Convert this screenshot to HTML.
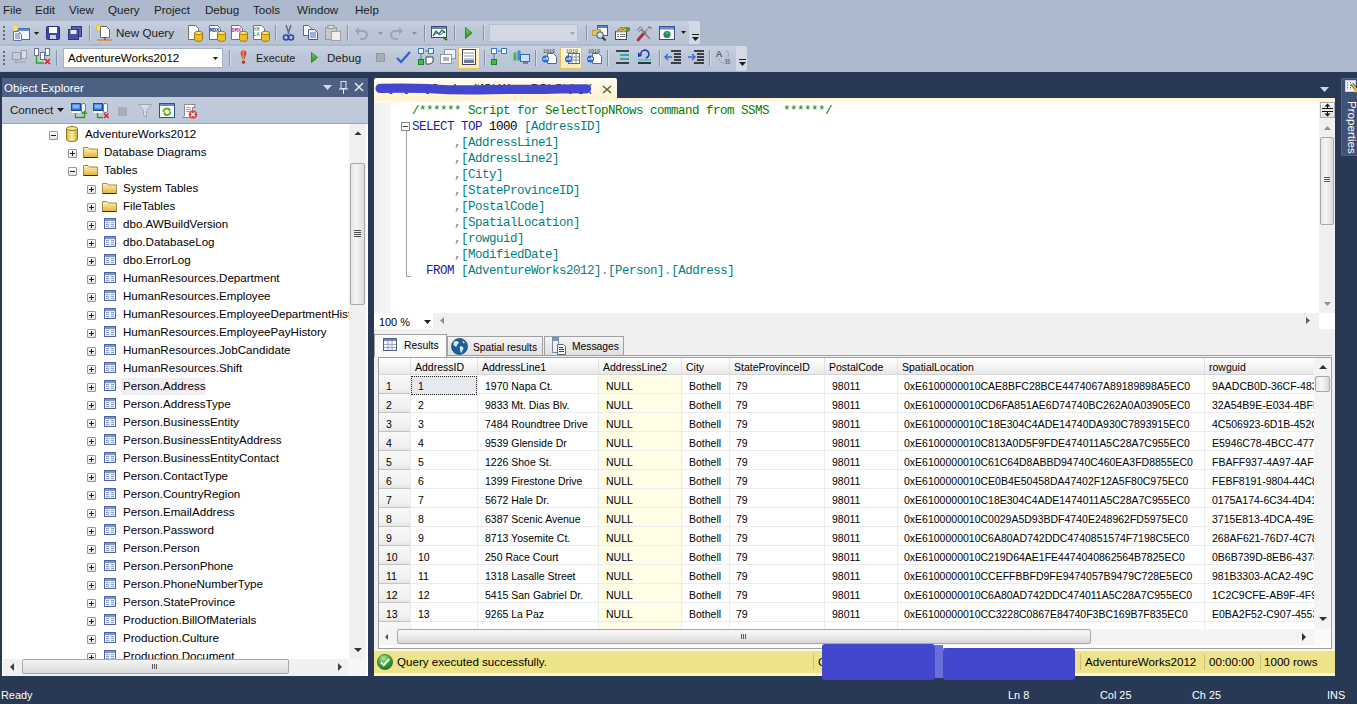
<!DOCTYPE html><html><head><meta charset="utf-8"><style>
html,body{margin:0;padding:0;}
body{width:1357px;height:704px;position:relative;overflow:hidden;background:#293955;font-family:"Liberation Sans",sans-serif;}
.t{position:absolute;white-space:pre;line-height:1;}
.m{position:absolute;white-space:pre;font-family:"Liberation Mono",monospace;font-size:12.5px;letter-spacing:-0.5px;line-height:16px;}
svg{overflow:visible}
</style></head><body>
<div style="position:absolute;left:0px;top:0px;width:1357px;height:72px;background:#adb9cd"></div>
<div class="t" style="left:3px;top:4.37px;font-size:11.6px;color:#1b1b1b;">File</div>
<div class="t" style="left:35px;top:4.37px;font-size:11.6px;color:#1b1b1b;">Edit</div>
<div class="t" style="left:69px;top:4.37px;font-size:11.6px;color:#1b1b1b;">View</div>
<div class="t" style="left:108px;top:4.37px;font-size:11.6px;color:#1b1b1b;">Query</div>
<div class="t" style="left:154px;top:4.37px;font-size:11.6px;color:#1b1b1b;">Project</div>
<div class="t" style="left:205px;top:4.37px;font-size:11.6px;color:#1b1b1b;">Debug</div>
<div class="t" style="left:253px;top:4.37px;font-size:11.6px;color:#1b1b1b;">Tools</div>
<div class="t" style="left:297px;top:4.37px;font-size:11.6px;color:#1b1b1b;">Window</div>
<div class="t" style="left:355px;top:4.37px;font-size:11.6px;color:#1b1b1b;">Help</div>
<div style="position:absolute;left:0px;top:21px;width:700px;height:23px;background:linear-gradient(#c9d2e1,#bcc7d8 40%,#b8c3d5);border-radius:0 3px 3px 0"></div>
<div style="position:absolute;left:3px;top:26px;width:2px;height:2px;background:#5a6a8a"></div>
<div style="position:absolute;left:3px;top:30px;width:2px;height:2px;background:#5a6a8a"></div>
<div style="position:absolute;left:3px;top:34px;width:2px;height:2px;background:#5a6a8a"></div>
<div style="position:absolute;left:3px;top:38px;width:2px;height:2px;background:#5a6a8a"></div>
<div style="position:absolute;left:689px;top:21px;width:11px;height:23px;background:#d3dae6;border-radius:0 3px 3px 0"></div>
<div style="position:absolute;left:0px;top:46px;width:747px;height:25px;background:linear-gradient(#c9d2e1,#bcc7d8 40%,#b8c3d5);border-radius:0 3px 3px 0"></div>
<div style="position:absolute;left:3px;top:51px;width:2px;height:2px;background:#5a6a8a"></div>
<div style="position:absolute;left:3px;top:55px;width:2px;height:2px;background:#5a6a8a"></div>
<div style="position:absolute;left:3px;top:59px;width:2px;height:2px;background:#5a6a8a"></div>
<div style="position:absolute;left:3px;top:63px;width:2px;height:2px;background:#5a6a8a"></div>
<div style="position:absolute;left:736px;top:46px;width:11px;height:25px;background:#d3dae6;border-radius:0 3px 3px 0"></div>
<div style="position:absolute;left:692px;top:34px;width:7px;height:1px;background:#1d1d1d"></div>
<svg style="position:absolute;left:692px;top:37px" width="7" height="4" viewBox="0 0 7 4"><path d="M0 0H7L3.5 4Z" fill="#1d1d1d"/></svg>
<div style="position:absolute;left:739px;top:59px;width:7px;height:1px;background:#1d1d1d"></div>
<svg style="position:absolute;left:739px;top:62px" width="7" height="4" viewBox="0 0 7 4"><path d="M0 0H7L3.5 4Z" fill="#1d1d1d"/></svg>
<svg style="position:absolute;left:12px;top:25px" width="18" height="17" viewBox="0 0 18 17"><rect x="5.5" y="3.5" width="12" height="11" fill="#f4f8ff" stroke="#4a6aa8"/><rect x="6" y="4" width="11" height="2" fill="#6a8ad0"/><path d="M1.5 6.5H6.5L9.5 9.5V15.5H1.5Z" fill="#ffffff" stroke="#5a78b0"/><path d="M3 9H8M3 11H8M3 13H8" stroke="#4a6aa8"/><circle cx="3.5" cy="3" r="2.6" fill="#ffe040"/></svg>
<svg style="position:absolute;left:34px;top:32px" width="5" height="3" viewBox="0 0 5 3"><path d="M0 0H5L2.5 3Z" fill="#1d1d1d"/></svg>
<svg style="position:absolute;left:46px;top:26px" width="14" height="14" viewBox="0 0 14 14"><rect x="0.5" y="0.5" width="13" height="13" rx="1" fill="#3a4aa0" stroke="#28307a"/><rect x="3" y="1" width="8" height="6" fill="#ffffff"/><rect x="4" y="9" width="6" height="4" fill="#c8d0f0"/></svg>
<svg style="position:absolute;left:68px;top:26px" width="14" height="14" viewBox="0 0 14 14"><rect x="3.5" y="0.5" width="10" height="10" fill="#5a60b8" stroke="#303880"/><rect x="0.5" y="3.5" width="10" height="10" fill="#4a50a8" stroke="#303880"/><rect x="2.5" y="4" width="6" height="4" fill="#e8ecff"/></svg>
<div style="position:absolute;left:89px;top:25px;width:1px;height:16px;background:#8593aa;box-shadow:1px 0 0 #d4dbe6"></div>
<svg style="position:absolute;left:96px;top:24px" width="17" height="18" viewBox="0 0 17 18"><circle cx="4" cy="4" r="3.5" fill="#ffe640" stroke="#e8b000" stroke-width=".6"/><path d="M4.5 2.5H10.5L13.5 5.5V13.5H4.5Z" fill="#ffffff" stroke="#6a6a6a"/><path d="M1 16H16" stroke="#e08a20" stroke-width="1.5"/><path d="M9 13V16" stroke="#404040"/></svg>
<div class="t" style="left:116px;top:27.37px;font-size:11.6px;color:#1b1b1b;">New Query</div>
<svg style="position:absolute;left:187px;top:25px" width="16" height="16" viewBox="0 0 16 16"><path d="M1.5 0.5H8.5L11.5 3.5V14.5H1.5Z" fill="#ffffff" stroke="#707070"/><path d="M7.5 8V14.5A4.0 1.8 0 0 0 15.5 14.5V8Z" fill="#f0c020" stroke="#a07810"/><ellipse cx="11.5" cy="8" rx="4.0" ry="1.6" fill="#ffe880" stroke="#a07810"/></svg>
<svg style="position:absolute;left:208px;top:25px" width="18" height="16" viewBox="0 0 18 16"><path d="M1.5 0.5H9.5L12.5 3.5V14.5H1.5Z" fill="#ffffff" stroke="#707070"/><text x="1.5" y="7" font-size="5.5" font-weight="bold" font-family="Liberation Mono" fill="#2040a0">MDX</text><path d="M9.5 8V14.5A4.0 1.8 0 0 0 17.5 14.5V8Z" fill="#f0c020" stroke="#a07810"/><ellipse cx="13.5" cy="8" rx="4.0" ry="1.6" fill="#ffe880" stroke="#a07810"/></svg>
<svg style="position:absolute;left:230px;top:25px" width="18" height="16" viewBox="0 0 18 16"><path d="M1.5 0.5H9.5L12.5 3.5V14.5H1.5Z" fill="#ffffff" stroke="#707070"/><text x="1.5" y="7" font-size="5.5" font-weight="bold" font-family="Liberation Mono" fill="#c030a0">DMX</text><path d="M9.5 8V14.5A4.0 1.8 0 0 0 17.5 14.5V8Z" fill="#f0c020" stroke="#a07810"/><ellipse cx="13.5" cy="8" rx="4.0" ry="1.6" fill="#ffe880" stroke="#a07810"/></svg>
<svg style="position:absolute;left:252px;top:25px" width="18" height="16" viewBox="0 0 18 16"><path d="M1.5 0.5H9.5L12.5 3.5V14.5H1.5Z" fill="#ffffff" stroke="#707070"/><text x="1.5" y="6" font-size="5" font-family="Liberation Mono" fill="#208060">XM</text><text x="1.5" y="11" font-size="5" font-family="Liberation Mono" fill="#208060">LA</text><path d="M9.5 8V14.5A4.0 1.8 0 0 0 17.5 14.5V8Z" fill="#f0c020" stroke="#a07810"/><ellipse cx="13.5" cy="8" rx="4.0" ry="1.6" fill="#ffe880" stroke="#a07810"/></svg>
<div style="position:absolute;left:275px;top:25px;width:1px;height:16px;background:#8593aa;box-shadow:1px 0 0 #d4dbe6"></div>
<svg style="position:absolute;left:283px;top:25px" width="11" height="16" viewBox="0 0 11 16"><path d="M3 0L6 9M8 0L5 9" stroke="#5a6a8a" stroke-width="1.4"/><circle cx="3" cy="12.5" r="2.5" fill="none" stroke="#2a48b0" stroke-width="1.6"/><circle cx="8" cy="12.5" r="2.5" fill="none" stroke="#2a48b0" stroke-width="1.6"/></svg>
<svg style="position:absolute;left:303px;top:25px" width="16" height="15" viewBox="0 0 16 15"><path d="M0.5 0.5H5.5L8.5 3.5V10.5H0.5Z" fill="#ffffff" stroke="#5a6a90"/><path d="M5.5 4.5H11.5L14.5 7.5V14.5H5.5Z" fill="#f0f4ff" stroke="#4a5a90"/><path d="M7 8H13M7 10H13M7 12H13" stroke="#4a6ab0"/></svg>
<svg style="position:absolute;left:325px;top:25px" width="17" height="16" viewBox="0 0 17 16"><rect x="0.5" y="2.5" width="11" height="12" fill="#c8c8c8" stroke="#9a9a9a"/><rect x="3" y="0.5" width="6" height="3" fill="#e0e0e0" stroke="#9a9a9a"/><rect x="6.5" y="6.5" width="9" height="9" fill="#f0f0f0" stroke="#a0a0a0"/></svg>
<div style="position:absolute;left:347px;top:25px;width:1px;height:16px;background:#8593aa;box-shadow:1px 0 0 #d4dbe6"></div>
<svg style="position:absolute;left:355px;top:26px" width="13" height="14" viewBox="0 0 13 14"><path d="M3 5H8A4 4 0 0 1 8 13H5" stroke="#9aa4b8" stroke-width="2" fill="none"/><path d="M0 5L4 1V9Z" fill="#9aa4b8"/></svg>
<svg style="position:absolute;left:378px;top:32px" width="5" height="3" viewBox="0 0 5 3"><path d="M0 0H5L2.5 3Z" fill="#8a94a8"/></svg>
<svg style="position:absolute;left:390px;top:26px" width="13" height="14" viewBox="0 0 13 14"><path d="M10 5H5A4 4 0 0 0 5 13H8" stroke="#9aa4b8" stroke-width="2" fill="none"/><path d="M13 5L9 1V9Z" fill="#9aa4b8"/></svg>
<svg style="position:absolute;left:412px;top:32px" width="5" height="3" viewBox="0 0 5 3"><path d="M0 0H5L2.5 3Z" fill="#8a94a8"/></svg>
<div style="position:absolute;left:424px;top:25px;width:1px;height:16px;background:#8593aa;box-shadow:1px 0 0 #d4dbe6"></div>
<svg style="position:absolute;left:431px;top:25px" width="17" height="16" viewBox="0 0 17 16"><rect x="0.5" y="1.5" width="15" height="11" fill="#ffffff" stroke="#404a60"/><rect x="1" y="2" width="14" height="2" fill="#6a86c8"/><path d="M2 11L5 6L8 9L11 5L14 8" stroke="#208030" stroke-width="1.3" fill="none"/><path d="M2 10L6 8L9 10L14 6" stroke="#3050c0" stroke-width="1" fill="none"/><path d="M12 12L16 15" stroke="#207020" stroke-width="2"/></svg>
<div style="position:absolute;left:454px;top:25px;width:1px;height:16px;background:#8593aa;box-shadow:1px 0 0 #d4dbe6"></div>
<svg style="position:absolute;left:465px;top:27px" width="8" height="12" viewBox="0 0 8 12"><defs><linearGradient id="pl2" x1="0" y1="0" x2="0" y2="1"><stop offset="0" stop-color="#7ad060"/><stop offset="1" stop-color="#1e8a1e"/></linearGradient></defs><path d="M0.5 0.5L7 6L0.5 11.5Z" fill="url(#pl2)" stroke="#217a21" stroke-width="0.8"/></svg>
<div style="position:absolute;left:483px;top:25px;width:1px;height:16px;background:#8593aa;box-shadow:1px 0 0 #d4dbe6"></div>
<div style="position:absolute;left:489px;top:24px;width:89px;height:18px;background:#d2d9e5;border:1px solid #b8c1d2;box-sizing:border-box"></div>
<svg style="position:absolute;left:570px;top:32px" width="5" height="3" viewBox="0 0 5 3"><path d="M0 0H5L2.5 3Z" fill="#9aa4b4"/></svg>
<div style="position:absolute;left:586px;top:25px;width:1px;height:16px;background:#8593aa;box-shadow:1px 0 0 #d4dbe6"></div>
<svg style="position:absolute;left:592px;top:25px" width="17" height="17" viewBox="0 0 17 17"><rect x="5.5" y="0.5" width="10" height="10" fill="#f6f9ff" stroke="#3d5a9a"/><rect x="6" y="1" width="9" height="2" fill="#5c80cc"/><path d="M0.5 5.5H4L5 4.5H8.5V10.5H0.5Z" fill="#e6c45a" stroke="#a88a30" stroke-width="0.7"/><circle cx="8" cy="10" r="3.2" fill="#e0f0ff" fill-opacity="0.8" stroke="#5a6a80" stroke-width="1.2"/><path d="M10.3 12.3L13.5 15.5" stroke="#3a3a3a" stroke-width="2"/></svg>
<svg style="position:absolute;left:614px;top:25px" width="17" height="16" viewBox="0 0 17 16"><rect x="1.5" y="6.5" width="11" height="8" fill="#ffffff" stroke="#404a5a"/><path d="M3 9.5H5M6 9.5H11M3 11.5H5M6 11.5H11" stroke="#6a7488"/><path d="M2 7L6 2.5H14.5L11 7Z" fill="#e8c040" stroke="#8a7020" stroke-width=".6"/><path d="M11 2.5H16V6L13 7Z" fill="#4a9a30"/><path d="M4 6L6.5 3M6 6.5L9 3M8 6.5L11 3" stroke="#1a1a1a" stroke-width="0.8" stroke-dasharray="1 1"/></svg>
<svg style="position:absolute;left:636px;top:25px" width="17" height="16" viewBox="0 0 17 16"><path d="M2 15L9 7" stroke="#b02840" stroke-width="2.8" stroke-linecap="round"/><path d="M9 7L13 2.5" stroke="#9aa4b0" stroke-width="1.6"/><path d="M4 3L14 14" stroke="#7a8494" stroke-width="1.6"/><path d="M1.5 4.5L4.5 1.5L6.5 3.5L3.5 6.5Z" fill="#b0b8c4" stroke="#606a78" stroke-width="0.7"/><path d="M12.5 1.5L15.5 3.5" stroke="#606a78" stroke-width="1.2"/></svg>
<svg style="position:absolute;left:659px;top:26px" width="16" height="15" viewBox="0 0 16 15"><rect x="0.5" y="0.5" width="15" height="13" fill="#f4f8ff" stroke="#34528e"/><rect x="1" y="1" width="14" height="2.5" fill="#6a8ad0"/><circle cx="8" cy="8.5" r="3.6" fill="#2a8a5a"/><path d="M6.5 7C7.5 6.5 8.5 7.5 9.5 7" stroke="#8ad0a0" stroke-width="0.8" fill="none"/></svg>
<svg style="position:absolute;left:681px;top:31px" width="5" height="3" viewBox="0 0 5 3"><path d="M0 0H5L2.5 3Z" fill="#1d1d1d"/></svg>
<svg style="position:absolute;left:12px;top:50px" width="17" height="15" viewBox="0 0 17 15"><rect x="0.5" y="2.5" width="8" height="7" fill="#c8ccd4" stroke="#9aa0aa"/><rect x="9.5" y="0.5" width="5" height="8" fill="#dcdfe4" stroke="#9aa0aa"/><path d="M2 12H14M4 10V14" stroke="#a0a4ac"/></svg>
<svg style="position:absolute;left:34px;top:48px" width="17" height="17" viewBox="0 0 17 17"><rect x="0.5" y="0.5" width="4" height="7" fill="#ffffff" stroke="#6a7a8a"/><rect x="6.5" y="4.5" width="4" height="7" fill="#ffffff" stroke="#6a7a8a"/><rect x="11.5" y="0.5" width="4" height="7" fill="#ffffff" stroke="#6a7a8a"/><path d="M2.5 8V15H10" stroke="#30a030" stroke-width="1.3" fill="none"/><path d="M11 11L16 16M16 11L11 16" stroke="#e02020" stroke-width="1.5"/></svg>
<div style="position:absolute;left:56px;top:50px;width:1px;height:16px;background:#8593aa;box-shadow:1px 0 0 #d4dbe6"></div>
<div style="position:absolute;left:63px;top:48px;width:160px;height:20px;background:#ffffff;border:1px solid #a4b0c6;box-sizing:border-box"></div>
<div class="t" style="left:68px;top:52.37px;font-size:11.6px;color:#000;">AdventureWorks2012</div>
<svg style="position:absolute;left:213px;top:57px" width="5" height="3" viewBox="0 0 5 3"><path d="M0 0H5L2.5 3Z" fill="#1d1d1d"/></svg>
<div style="position:absolute;left:229px;top:50px;width:1px;height:16px;background:#8593aa;box-shadow:1px 0 0 #d4dbe6"></div>
<svg style="position:absolute;left:240px;top:50px" width="7" height="14" viewBox="0 0 7 14"><defs><linearGradient id="ex" x1="0" y1="0" x2="1" y2="0"><stop offset="0" stop-color="#c83a20"/><stop offset="0.45" stop-color="#f48060"/><stop offset="1" stop-color="#b02810"/></linearGradient></defs><path d="M3.5 0.3C5.8 0.3 6.6 2 6.2 4.2L4.3 9.8H2.7L0.8 4.2C0.4 2 1.2 0.3 3.5 0.3Z" fill="url(#ex)"/><circle cx="3.5" cy="12.2" r="1.6" fill="#b83018"/></svg>
<div class="t" style="left:256px;top:52.95px;font-size:10.9px;color:#1b1b1b;">Execute</div>
<svg style="position:absolute;left:311px;top:52px" width="7" height="11" viewBox="0 0 7 11"><defs><linearGradient id="pl" x1="0" y1="0" x2="0" y2="1"><stop offset="0" stop-color="#7ad060"/><stop offset="1" stop-color="#1e8a1e"/></linearGradient></defs><path d="M0.5 0.5L6.5 5.5L0.5 10.5Z" fill="url(#pl)" stroke="#217a21" stroke-width="0.8"/></svg>
<div class="t" style="left:327px;top:52.37px;font-size:11.6px;color:#1b1b1b;">Debug</div>
<div style="position:absolute;left:376px;top:53px;width:9px;height:9px;background:#a8acb4;border:1px solid #9498a0;box-sizing:border-box"></div>
<svg style="position:absolute;left:396px;top:50px" width="15" height="14" viewBox="0 0 15 14"><path d="M1 8L5 12L14 2" stroke="#3a64c8" stroke-width="2.4" fill="none"/></svg>
<svg style="position:absolute;left:418px;top:48px" width="16" height="17" viewBox="0 0 16 17"><rect x="0.5" y="0.5" width="5" height="5" fill="#ffffff" stroke="#3a78c8"/><rect x="10.5" y="0.5" width="5" height="5" fill="#ffffff" stroke="#3a78c8"/><rect x="0.5" y="11.5" width="5" height="5" fill="#40c040" stroke="#208020"/><path d="M7 3H10M3 6V11" stroke="#3a78c8"/><path d="M8 9H15V14L12 16H8Z" fill="#ffffff" stroke="#404040"/></svg>
<svg style="position:absolute;left:440px;top:49px" width="16" height="16" viewBox="0 0 16 16"><rect x="4.5" y="0.5" width="11" height="9" fill="#f0f4fa" stroke="#8a96aa"/><rect x="0.5" y="5.5" width="11" height="9" fill="#ffffff" stroke="#8a96aa"/><path d="M3 9H9M3 11H9" stroke="#606a80"/></svg>
<div style="position:absolute;left:458px;top:47px;width:22px;height:22px;background:linear-gradient(#fff8dc,#fbe9b4);border:1px solid #e5c365;box-sizing:border-box"></div>
<svg style="position:absolute;left:462px;top:49px" width="14" height="16" viewBox="0 0 14 16"><rect x="0.5" y="0.5" width="13" height="15" fill="#ffffff" stroke="#404858"/><path d="M2 4H12M2 7H12M2 10H12" stroke="#8a92a8"/><rect x="2" y="11" width="10" height="3" fill="#6a7a98"/></svg>
<div style="position:absolute;left:484px;top:50px;width:1px;height:16px;background:#8593aa;box-shadow:1px 0 0 #d4dbe6"></div>
<svg style="position:absolute;left:491px;top:48px" width="16" height="17" viewBox="0 0 16 17"><rect x="0.5" y="0.5" width="5" height="5" fill="#ffffff" stroke="#3a78c8"/><rect x="10.5" y="0.5" width="5" height="5" fill="#ffffff" stroke="#3a78c8"/><rect x="0.5" y="11.5" width="5" height="5" fill="#40c040" stroke="#208020"/><path d="M7 3H10M3 6V11" stroke="#3a78c8"/></svg>
<svg style="position:absolute;left:513px;top:49px" width="17" height="16" viewBox="0 0 17 16"><rect x="0.5" y="3.5" width="3" height="8" fill="#50b050"/><rect x="4.5" y="1.5" width="3" height="10" fill="#3a8ad8"/><rect x="7.5" y="5.5" width="9" height="7" fill="#c8e0ff" stroke="#3a6ab0"/><path d="M10 14H15" stroke="#404040"/></svg>
<div style="position:absolute;left:535px;top:50px;width:1px;height:16px;background:#8593aa;box-shadow:1px 0 0 #d4dbe6"></div>
<svg style="position:absolute;left:541px;top:48px" width="17" height="17" viewBox="0 0 17 17"><text x="2" y="5" font-size="5" font-family="Liberation Mono" fill="#404040">1010</text><path d="M6.5 5.5H12.5L15.5 8.5V15.5H6.5Z" fill="#ffffff" stroke="#606a80"/><circle cx="4.5" cy="11" r="3.5" fill="#2a6ad8"/><path d="M2 11H7L5 9" stroke="#ffffff" stroke-width="1" fill="none"/></svg>
<div style="position:absolute;left:560px;top:47px;width:22px;height:22px;background:linear-gradient(#fff8dc,#fbe9b4);border:1px solid #e5c365;box-sizing:border-box"></div>
<svg style="position:absolute;left:564px;top:48px" width="17" height="17" viewBox="0 0 17 17"><text x="2" y="5" font-size="5" font-family="Liberation Mono" fill="#404040">1010</text><rect x="4.5" y="5.5" width="11" height="10" fill="#ffffff" stroke="#606a80"/><path d="M8 6V15M12 6V15M5 9H15M5 12H15" stroke="#8a92a8"/><circle cx="4.5" cy="11" r="3.5" fill="#2a6ad8"/><path d="M2 11H7L5 9" stroke="#ffffff" stroke-width="1" fill="none"/></svg>
<svg style="position:absolute;left:586px;top:48px" width="17" height="17" viewBox="0 0 17 17"><text x="2" y="5" font-size="5" font-family="Liberation Mono" fill="#404040">1010</text><path d="M6.5 5.5H12.5L15.5 8.5V15.5H6.5Z" fill="#ffffff" stroke="#606a80"/><circle cx="4.5" cy="11" r="3.5" fill="#2a6ad8"/><path d="M2 11H7L5 9" stroke="#ffffff" stroke-width="1" fill="none"/></svg>
<div style="position:absolute;left:607px;top:50px;width:1px;height:16px;background:#8593aa;box-shadow:1px 0 0 #d4dbe6"></div>
<svg style="position:absolute;left:614px;top:50px" width="16" height="14" viewBox="0 0 16 14"><path d="M2 1H15M6 5H15M6 9H15M2 13H15" stroke="#101010" stroke-width="1.6"/><path d="M6 5H15M6 9H15" stroke="#40c8c8" stroke-width="1.6"/></svg>
<svg style="position:absolute;left:636px;top:49px" width="16" height="16" viewBox="0 0 16 16"><path d="M5 6A4 4 0 1 1 10 9" stroke="#1a3ab0" stroke-width="1.6" fill="none"/><path d="M2 3L6 7L2 8Z" fill="#1a3ab0"/><path d="M2 11H15" stroke="#40c8c8" stroke-width="1.6"/><path d="M2 14H15" stroke="#101010" stroke-width="1.6"/></svg>
<div style="position:absolute;left:659px;top:50px;width:1px;height:16px;background:#8593aa;box-shadow:1px 0 0 #d4dbe6"></div>
<svg style="position:absolute;left:665px;top:49px" width="17" height="16" viewBox="0 0 17 16"><path d="M6 2H16M9 5H16M9 8H16M9 11H16M6 14H16" stroke="#101010" stroke-width="1.5"/><path d="M0 8H7M3 5L0 8L3 11" stroke="#3a6ad8" stroke-width="1.4" fill="none"/></svg>
<svg style="position:absolute;left:688px;top:49px" width="17" height="16" viewBox="0 0 17 16"><path d="M6 2H16M9 5H16M9 8H16M9 11H16M6 14H16" stroke="#101010" stroke-width="1.5"/><path d="M0 8H7M4 5L7 8L4 11" stroke="#3a6ad8" stroke-width="1.4" fill="none"/></svg>
<div style="position:absolute;left:709px;top:50px;width:1px;height:16px;background:#8593aa;box-shadow:1px 0 0 #d4dbe6"></div>
<svg style="position:absolute;left:716px;top:49px" width="17" height="16" viewBox="0 0 17 16"><text x="0" y="8" font-size="9" font-family="Liberation Sans" fill="#202020">A</text><text x="9" y="15" font-size="8" font-family="Liberation Sans" fill="#606060">B</text><path d="M10 1A6 6 0 0 1 12 8M3 10A5 5 0 0 0 8 14" stroke="#808080" stroke-dasharray="1 1" fill="none"/></svg>
<div style="position:absolute;left:2px;top:78px;width:366px;height:19px;background:#4d6082"></div>
<div class="t" style="left:4px;top:82.37px;font-size:11.6px;color:#ffffff;">Object Explorer</div>
<div style="position:absolute;left:2px;top:97px;width:366px;height:27px;background:linear-gradient(#c3ccdc,#bcc7d8)"></div>
<div style="position:absolute;left:2px;top:123px;width:366px;height:1px;background:#98a4b8"></div>
<div class="t" style="left:10px;top:104.37px;font-size:11.6px;color:#1b1b1b;">Connect</div>
<svg style="position:absolute;left:57px;top:108px" width="7" height="4" viewBox="0 0 7 4"><path d="M0 0H7L3.5 4Z" fill="#1b1b1b"/></svg>
<svg style="position:absolute;left:71px;top:103px" width="17" height="16" viewBox="0 0 17 16"><rect x="0.5" y="0.5" width="9" height="7" fill="#2f6fd8" stroke="#1d4a9a"/><rect x="1.5" y="1.5" width="7" height="4" fill="#7fb6ff"/><rect x="0.5" y="8" width="9" height="2" fill="#f4f6fa"/><rect x="10.5" y="0.5" width="4" height="9" rx="1.5" fill="#ffffff" stroke="#707a88"/><path d="M4.5 10V14.5H13.5V9" stroke="#2a9a2a" stroke-width="1.3" fill="none"/><path d="M11 11L13.5 8.5L16 11" stroke="#2a9a2a" stroke-width="1.3" fill="none"/></svg>
<svg style="position:absolute;left:93px;top:103px" width="17" height="16" viewBox="0 0 17 16"><rect x="0.5" y="0.5" width="9" height="7" fill="#2f6fd8" stroke="#1d4a9a"/><rect x="1.5" y="1.5" width="7" height="4" fill="#7fb6ff"/><rect x="0.5" y="8" width="9" height="2" fill="#f4f6fa"/><rect x="10.5" y="0.5" width="4" height="9" rx="1.5" fill="#ffffff" stroke="#707a88"/><path d="M4.5 10V14.5H10" stroke="#2a9a2a" stroke-width="1.3" fill="none"/><path d="M11 10.5L15.5 15M15.5 10.5L11 15" stroke="#e02020" stroke-width="1.5"/></svg>
<div style="position:absolute;left:118px;top:107px;width:9px;height:9px;background:#a8acb4"></div>
<svg style="position:absolute;left:138px;top:104px" width="14" height="14" viewBox="0 0 14 14"><path d="M0.5 0.5H13.5L8.5 6.5V13.5L5.5 11V6.5Z" fill="#d8dce4" stroke="#a0a6b0"/></svg>
<svg style="position:absolute;left:159px;top:103px" width="16" height="16" viewBox="0 0 16 16"><rect x="0.5" y="0.5" width="15" height="14" fill="#ffffff" stroke="#2e4e8c"/><rect x="1" y="1" width="14" height="2" fill="#6a8ad0"/><path d="M4.5 9A3.5 3 0 0 1 10.5 6.5M11.5 8.5A3.5 3 0 0 1 5.5 11" stroke="#5aae1a" stroke-width="1.8" fill="none"/><path d="M9 5L12 6.5L10 9Z M7 12.5L4 11L6 8.5Z" fill="#5aae1a"/></svg>
<svg style="position:absolute;left:181px;top:103px" width="17" height="16" viewBox="0 0 17 16"><path d="M3.5 1.5H14.5C13 2.5 13 4 14.5 4.5H11.5V11.5C12 13 11 14.5 9 14.5H1.5C3 14 3.5 13 3.5 12Z" fill="#ffffff" stroke="#8a8a8a"/><path d="M5 4.5H10M5 6.5H10M5 8.5H9" stroke="#a8a8a8"/><circle cx="12" cy="11.5" r="4.3" fill="#d84848"/><path d="M10.2 9.7L13.8 13.3M13.8 9.7L10.2 13.3" stroke="#ffffff" stroke-width="1.3"/></svg>
<svg style="position:absolute;left:323px;top:85px" width="9" height="5" viewBox="0 0 9 5"><path d="M0 0H9L4.5 5Z" fill="#d4dae6"/></svg>
<svg style="position:absolute;left:339px;top:81px" width="9" height="13" viewBox="0 0 9 13"><rect x="2" y="0.5" width="5" height="7" fill="none" stroke="#e4e8f0"/><path d="M0 8H9M4.5 8V13" stroke="#e4e8f0"/></svg>
<svg style="position:absolute;left:354px;top:82px" width="10" height="10" viewBox="0 0 10 10"><path d="M1 1L9 9M9 1L1 9" stroke="#e4e8f0" stroke-width="1.5"/></svg>
<div style="position:absolute;left:2px;top:124px;width:366px;height:552px;background:#ffffff"></div>
<div style="position:absolute;left:3px;top:124px;width:346px;height:535px;overflow:hidden">
<div style="position:absolute;left:46px;top:7px;width:9px;height:9px;background:linear-gradient(#ffffff,#e6e6e6);border:1px solid #969696;box-sizing:border-box;border-radius:1px"></div>
<div style="position:absolute;left:48px;top:11px;width:5px;height:1px;background:#202020"></div>
<svg style="position:absolute;left:63px;top:2px" width="12" height="16" viewBox="0 0 12 16"><defs><linearGradient id="dg" x1="0" y1="0" x2="1" y2="0"><stop offset="0" stop-color="#d8b640"/><stop offset="0.5" stop-color="#fff2a0"/><stop offset="1" stop-color="#c9a030"/></linearGradient></defs><path d="M0.5 2.5V13.5A5.5 2 0 0 0 11.5 13.5V2.5Z" fill="url(#dg)" stroke="#9a7a20"/><ellipse cx="6" cy="2.5" rx="5.5" ry="2" fill="#f6e490" stroke="#9a7a20"/></svg>
<div class="t" style="left:82px;top:4.37px;font-size:11.6px;color:#000000;">AdventureWorks2012</div>
<div style="position:absolute;left:65px;top:25px;width:9px;height:9px;background:linear-gradient(#ffffff,#e6e6e6);border:1px solid #969696;box-sizing:border-box;border-radius:1px"></div>
<div style="position:absolute;left:67px;top:29px;width:5px;height:1px;background:#202020"></div>
<div style="position:absolute;left:69px;top:27px;width:1px;height:5px;background:#202020"></div>
<svg style="position:absolute;left:80px;top:22px" width="15" height="12" viewBox="0 0 15 12"><defs><linearGradient id="fg" x1="0" y1="0" x2="0" y2="1"><stop offset="0" stop-color="#fff3b8"/><stop offset="1" stop-color="#e2b23a"/></linearGradient></defs><path d="M0.5 11.5V1.5H5L6.5 3H14.5V11.5Z" fill="url(#fg)" stroke="#a88a3a"/><path d="M0.5 11.5H14.5" stroke="#3a2a0a"/></svg>
<div class="t" style="left:101px;top:22.37px;font-size:11.6px;color:#000000;">Database Diagrams</div>
<div style="position:absolute;left:65px;top:43px;width:9px;height:9px;background:linear-gradient(#ffffff,#e6e6e6);border:1px solid #969696;box-sizing:border-box;border-radius:1px"></div>
<div style="position:absolute;left:67px;top:47px;width:5px;height:1px;background:#202020"></div>
<svg style="position:absolute;left:80px;top:40px" width="15" height="12" viewBox="0 0 15 12"><defs><linearGradient id="fg" x1="0" y1="0" x2="0" y2="1"><stop offset="0" stop-color="#fff3b8"/><stop offset="1" stop-color="#e2b23a"/></linearGradient></defs><path d="M0.5 11.5V1.5H5L6.5 3H14.5V11.5Z" fill="url(#fg)" stroke="#a88a3a"/><path d="M0.5 11.5H14.5" stroke="#3a2a0a"/></svg>
<div class="t" style="left:101px;top:40.37px;font-size:11.6px;color:#000000;">Tables</div>
<div style="position:absolute;left:84px;top:61px;width:9px;height:9px;background:linear-gradient(#ffffff,#e6e6e6);border:1px solid #969696;box-sizing:border-box;border-radius:1px"></div>
<div style="position:absolute;left:86px;top:65px;width:5px;height:1px;background:#202020"></div>
<div style="position:absolute;left:88px;top:63px;width:1px;height:5px;background:#202020"></div>
<svg style="position:absolute;left:99px;top:58px" width="15" height="12" viewBox="0 0 15 12"><defs><linearGradient id="fg" x1="0" y1="0" x2="0" y2="1"><stop offset="0" stop-color="#fff3b8"/><stop offset="1" stop-color="#e2b23a"/></linearGradient></defs><path d="M0.5 11.5V1.5H5L6.5 3H14.5V11.5Z" fill="url(#fg)" stroke="#a88a3a"/><path d="M0.5 11.5H14.5" stroke="#3a2a0a"/></svg>
<div class="t" style="left:120px;top:58.37px;font-size:11.6px;color:#000000;">System Tables</div>
<div style="position:absolute;left:84px;top:79px;width:9px;height:9px;background:linear-gradient(#ffffff,#e6e6e6);border:1px solid #969696;box-sizing:border-box;border-radius:1px"></div>
<div style="position:absolute;left:86px;top:83px;width:5px;height:1px;background:#202020"></div>
<div style="position:absolute;left:88px;top:81px;width:1px;height:5px;background:#202020"></div>
<svg style="position:absolute;left:99px;top:76px" width="15" height="12" viewBox="0 0 15 12"><defs><linearGradient id="fg" x1="0" y1="0" x2="0" y2="1"><stop offset="0" stop-color="#fff3b8"/><stop offset="1" stop-color="#e2b23a"/></linearGradient></defs><path d="M0.5 11.5V1.5H5L6.5 3H14.5V11.5Z" fill="url(#fg)" stroke="#a88a3a"/><path d="M0.5 11.5H14.5" stroke="#3a2a0a"/></svg>
<div class="t" style="left:120px;top:76.37px;font-size:11.6px;color:#000000;">FileTables</div>
<div style="position:absolute;left:84px;top:97px;width:9px;height:9px;background:linear-gradient(#ffffff,#e6e6e6);border:1px solid #969696;box-sizing:border-box;border-radius:1px"></div>
<div style="position:absolute;left:86px;top:101px;width:5px;height:1px;background:#202020"></div>
<div style="position:absolute;left:88px;top:99px;width:1px;height:5px;background:#202020"></div>
<svg style="position:absolute;left:101px;top:94px" width="12" height="11" viewBox="0 0 12 11"><rect x="0.5" y="0.5" width="11" height="10" fill="#e8eefa" stroke="#4a64a4"/><rect x="1" y="1" width="10" height="2" fill="#7896d6"/><path d="M2 4.5H5M7 4.5H10M2 6.5H5M7 6.5H10M2 8.5H5M7 8.5H10" stroke="#8ea2d0" stroke-width="1"/></svg>
<div class="t" style="left:120px;top:94.37px;font-size:11.6px;color:#000000;">dbo.AWBuildVersion</div>
<div style="position:absolute;left:84px;top:115px;width:9px;height:9px;background:linear-gradient(#ffffff,#e6e6e6);border:1px solid #969696;box-sizing:border-box;border-radius:1px"></div>
<div style="position:absolute;left:86px;top:119px;width:5px;height:1px;background:#202020"></div>
<div style="position:absolute;left:88px;top:117px;width:1px;height:5px;background:#202020"></div>
<svg style="position:absolute;left:101px;top:112px" width="12" height="11" viewBox="0 0 12 11"><rect x="0.5" y="0.5" width="11" height="10" fill="#e8eefa" stroke="#4a64a4"/><rect x="1" y="1" width="10" height="2" fill="#7896d6"/><path d="M2 4.5H5M7 4.5H10M2 6.5H5M7 6.5H10M2 8.5H5M7 8.5H10" stroke="#8ea2d0" stroke-width="1"/></svg>
<div class="t" style="left:120px;top:112.37px;font-size:11.6px;color:#000000;">dbo.DatabaseLog</div>
<div style="position:absolute;left:84px;top:133px;width:9px;height:9px;background:linear-gradient(#ffffff,#e6e6e6);border:1px solid #969696;box-sizing:border-box;border-radius:1px"></div>
<div style="position:absolute;left:86px;top:137px;width:5px;height:1px;background:#202020"></div>
<div style="position:absolute;left:88px;top:135px;width:1px;height:5px;background:#202020"></div>
<svg style="position:absolute;left:101px;top:130px" width="12" height="11" viewBox="0 0 12 11"><rect x="0.5" y="0.5" width="11" height="10" fill="#e8eefa" stroke="#4a64a4"/><rect x="1" y="1" width="10" height="2" fill="#7896d6"/><path d="M2 4.5H5M7 4.5H10M2 6.5H5M7 6.5H10M2 8.5H5M7 8.5H10" stroke="#8ea2d0" stroke-width="1"/></svg>
<div class="t" style="left:120px;top:130.37px;font-size:11.6px;color:#000000;">dbo.ErrorLog</div>
<div style="position:absolute;left:84px;top:151px;width:9px;height:9px;background:linear-gradient(#ffffff,#e6e6e6);border:1px solid #969696;box-sizing:border-box;border-radius:1px"></div>
<div style="position:absolute;left:86px;top:155px;width:5px;height:1px;background:#202020"></div>
<div style="position:absolute;left:88px;top:153px;width:1px;height:5px;background:#202020"></div>
<svg style="position:absolute;left:101px;top:148px" width="12" height="11" viewBox="0 0 12 11"><rect x="0.5" y="0.5" width="11" height="10" fill="#e8eefa" stroke="#4a64a4"/><rect x="1" y="1" width="10" height="2" fill="#7896d6"/><path d="M2 4.5H5M7 4.5H10M2 6.5H5M7 6.5H10M2 8.5H5M7 8.5H10" stroke="#8ea2d0" stroke-width="1"/></svg>
<div class="t" style="left:120px;top:148.37px;font-size:11.6px;color:#000000;">HumanResources.Department</div>
<div style="position:absolute;left:84px;top:169px;width:9px;height:9px;background:linear-gradient(#ffffff,#e6e6e6);border:1px solid #969696;box-sizing:border-box;border-radius:1px"></div>
<div style="position:absolute;left:86px;top:173px;width:5px;height:1px;background:#202020"></div>
<div style="position:absolute;left:88px;top:171px;width:1px;height:5px;background:#202020"></div>
<svg style="position:absolute;left:101px;top:166px" width="12" height="11" viewBox="0 0 12 11"><rect x="0.5" y="0.5" width="11" height="10" fill="#e8eefa" stroke="#4a64a4"/><rect x="1" y="1" width="10" height="2" fill="#7896d6"/><path d="M2 4.5H5M7 4.5H10M2 6.5H5M7 6.5H10M2 8.5H5M7 8.5H10" stroke="#8ea2d0" stroke-width="1"/></svg>
<div class="t" style="left:120px;top:166.37px;font-size:11.6px;color:#000000;">HumanResources.Employee</div>
<div style="position:absolute;left:84px;top:187px;width:9px;height:9px;background:linear-gradient(#ffffff,#e6e6e6);border:1px solid #969696;box-sizing:border-box;border-radius:1px"></div>
<div style="position:absolute;left:86px;top:191px;width:5px;height:1px;background:#202020"></div>
<div style="position:absolute;left:88px;top:189px;width:1px;height:5px;background:#202020"></div>
<svg style="position:absolute;left:101px;top:184px" width="12" height="11" viewBox="0 0 12 11"><rect x="0.5" y="0.5" width="11" height="10" fill="#e8eefa" stroke="#4a64a4"/><rect x="1" y="1" width="10" height="2" fill="#7896d6"/><path d="M2 4.5H5M7 4.5H10M2 6.5H5M7 6.5H10M2 8.5H5M7 8.5H10" stroke="#8ea2d0" stroke-width="1"/></svg>
<div class="t" style="left:120px;top:184.37px;font-size:11.6px;color:#000000;">HumanResources.EmployeeDepartmentHistory</div>
<div style="position:absolute;left:84px;top:205px;width:9px;height:9px;background:linear-gradient(#ffffff,#e6e6e6);border:1px solid #969696;box-sizing:border-box;border-radius:1px"></div>
<div style="position:absolute;left:86px;top:209px;width:5px;height:1px;background:#202020"></div>
<div style="position:absolute;left:88px;top:207px;width:1px;height:5px;background:#202020"></div>
<svg style="position:absolute;left:101px;top:202px" width="12" height="11" viewBox="0 0 12 11"><rect x="0.5" y="0.5" width="11" height="10" fill="#e8eefa" stroke="#4a64a4"/><rect x="1" y="1" width="10" height="2" fill="#7896d6"/><path d="M2 4.5H5M7 4.5H10M2 6.5H5M7 6.5H10M2 8.5H5M7 8.5H10" stroke="#8ea2d0" stroke-width="1"/></svg>
<div class="t" style="left:120px;top:202.37px;font-size:11.6px;color:#000000;">HumanResources.EmployeePayHistory</div>
<div style="position:absolute;left:84px;top:223px;width:9px;height:9px;background:linear-gradient(#ffffff,#e6e6e6);border:1px solid #969696;box-sizing:border-box;border-radius:1px"></div>
<div style="position:absolute;left:86px;top:227px;width:5px;height:1px;background:#202020"></div>
<div style="position:absolute;left:88px;top:225px;width:1px;height:5px;background:#202020"></div>
<svg style="position:absolute;left:101px;top:220px" width="12" height="11" viewBox="0 0 12 11"><rect x="0.5" y="0.5" width="11" height="10" fill="#e8eefa" stroke="#4a64a4"/><rect x="1" y="1" width="10" height="2" fill="#7896d6"/><path d="M2 4.5H5M7 4.5H10M2 6.5H5M7 6.5H10M2 8.5H5M7 8.5H10" stroke="#8ea2d0" stroke-width="1"/></svg>
<div class="t" style="left:120px;top:220.37px;font-size:11.6px;color:#000000;">HumanResources.JobCandidate</div>
<div style="position:absolute;left:84px;top:241px;width:9px;height:9px;background:linear-gradient(#ffffff,#e6e6e6);border:1px solid #969696;box-sizing:border-box;border-radius:1px"></div>
<div style="position:absolute;left:86px;top:245px;width:5px;height:1px;background:#202020"></div>
<div style="position:absolute;left:88px;top:243px;width:1px;height:5px;background:#202020"></div>
<svg style="position:absolute;left:101px;top:238px" width="12" height="11" viewBox="0 0 12 11"><rect x="0.5" y="0.5" width="11" height="10" fill="#e8eefa" stroke="#4a64a4"/><rect x="1" y="1" width="10" height="2" fill="#7896d6"/><path d="M2 4.5H5M7 4.5H10M2 6.5H5M7 6.5H10M2 8.5H5M7 8.5H10" stroke="#8ea2d0" stroke-width="1"/></svg>
<div class="t" style="left:120px;top:238.37px;font-size:11.6px;color:#000000;">HumanResources.Shift</div>
<div style="position:absolute;left:118px;top:254px;width:84px;height:17px;background:#efefef"></div>
<div style="position:absolute;left:84px;top:259px;width:9px;height:9px;background:linear-gradient(#ffffff,#e6e6e6);border:1px solid #969696;box-sizing:border-box;border-radius:1px"></div>
<div style="position:absolute;left:86px;top:263px;width:5px;height:1px;background:#202020"></div>
<div style="position:absolute;left:88px;top:261px;width:1px;height:5px;background:#202020"></div>
<svg style="position:absolute;left:101px;top:256px" width="12" height="11" viewBox="0 0 12 11"><rect x="0.5" y="0.5" width="11" height="10" fill="#e8eefa" stroke="#4a64a4"/><rect x="1" y="1" width="10" height="2" fill="#7896d6"/><path d="M2 4.5H5M7 4.5H10M2 6.5H5M7 6.5H10M2 8.5H5M7 8.5H10" stroke="#8ea2d0" stroke-width="1"/></svg>
<div class="t" style="left:120px;top:256.37px;font-size:11.6px;color:#000000;">Person.Address</div>
<div style="position:absolute;left:84px;top:277px;width:9px;height:9px;background:linear-gradient(#ffffff,#e6e6e6);border:1px solid #969696;box-sizing:border-box;border-radius:1px"></div>
<div style="position:absolute;left:86px;top:281px;width:5px;height:1px;background:#202020"></div>
<div style="position:absolute;left:88px;top:279px;width:1px;height:5px;background:#202020"></div>
<svg style="position:absolute;left:101px;top:274px" width="12" height="11" viewBox="0 0 12 11"><rect x="0.5" y="0.5" width="11" height="10" fill="#e8eefa" stroke="#4a64a4"/><rect x="1" y="1" width="10" height="2" fill="#7896d6"/><path d="M2 4.5H5M7 4.5H10M2 6.5H5M7 6.5H10M2 8.5H5M7 8.5H10" stroke="#8ea2d0" stroke-width="1"/></svg>
<div class="t" style="left:120px;top:274.37px;font-size:11.6px;color:#000000;">Person.AddressType</div>
<div style="position:absolute;left:84px;top:295px;width:9px;height:9px;background:linear-gradient(#ffffff,#e6e6e6);border:1px solid #969696;box-sizing:border-box;border-radius:1px"></div>
<div style="position:absolute;left:86px;top:299px;width:5px;height:1px;background:#202020"></div>
<div style="position:absolute;left:88px;top:297px;width:1px;height:5px;background:#202020"></div>
<svg style="position:absolute;left:101px;top:292px" width="12" height="11" viewBox="0 0 12 11"><rect x="0.5" y="0.5" width="11" height="10" fill="#e8eefa" stroke="#4a64a4"/><rect x="1" y="1" width="10" height="2" fill="#7896d6"/><path d="M2 4.5H5M7 4.5H10M2 6.5H5M7 6.5H10M2 8.5H5M7 8.5H10" stroke="#8ea2d0" stroke-width="1"/></svg>
<div class="t" style="left:120px;top:292.37px;font-size:11.6px;color:#000000;">Person.BusinessEntity</div>
<div style="position:absolute;left:84px;top:313px;width:9px;height:9px;background:linear-gradient(#ffffff,#e6e6e6);border:1px solid #969696;box-sizing:border-box;border-radius:1px"></div>
<div style="position:absolute;left:86px;top:317px;width:5px;height:1px;background:#202020"></div>
<div style="position:absolute;left:88px;top:315px;width:1px;height:5px;background:#202020"></div>
<svg style="position:absolute;left:101px;top:310px" width="12" height="11" viewBox="0 0 12 11"><rect x="0.5" y="0.5" width="11" height="10" fill="#e8eefa" stroke="#4a64a4"/><rect x="1" y="1" width="10" height="2" fill="#7896d6"/><path d="M2 4.5H5M7 4.5H10M2 6.5H5M7 6.5H10M2 8.5H5M7 8.5H10" stroke="#8ea2d0" stroke-width="1"/></svg>
<div class="t" style="left:120px;top:310.37px;font-size:11.6px;color:#000000;">Person.BusinessEntityAddress</div>
<div style="position:absolute;left:84px;top:331px;width:9px;height:9px;background:linear-gradient(#ffffff,#e6e6e6);border:1px solid #969696;box-sizing:border-box;border-radius:1px"></div>
<div style="position:absolute;left:86px;top:335px;width:5px;height:1px;background:#202020"></div>
<div style="position:absolute;left:88px;top:333px;width:1px;height:5px;background:#202020"></div>
<svg style="position:absolute;left:101px;top:328px" width="12" height="11" viewBox="0 0 12 11"><rect x="0.5" y="0.5" width="11" height="10" fill="#e8eefa" stroke="#4a64a4"/><rect x="1" y="1" width="10" height="2" fill="#7896d6"/><path d="M2 4.5H5M7 4.5H10M2 6.5H5M7 6.5H10M2 8.5H5M7 8.5H10" stroke="#8ea2d0" stroke-width="1"/></svg>
<div class="t" style="left:120px;top:328.37px;font-size:11.6px;color:#000000;">Person.BusinessEntityContact</div>
<div style="position:absolute;left:84px;top:349px;width:9px;height:9px;background:linear-gradient(#ffffff,#e6e6e6);border:1px solid #969696;box-sizing:border-box;border-radius:1px"></div>
<div style="position:absolute;left:86px;top:353px;width:5px;height:1px;background:#202020"></div>
<div style="position:absolute;left:88px;top:351px;width:1px;height:5px;background:#202020"></div>
<svg style="position:absolute;left:101px;top:346px" width="12" height="11" viewBox="0 0 12 11"><rect x="0.5" y="0.5" width="11" height="10" fill="#e8eefa" stroke="#4a64a4"/><rect x="1" y="1" width="10" height="2" fill="#7896d6"/><path d="M2 4.5H5M7 4.5H10M2 6.5H5M7 6.5H10M2 8.5H5M7 8.5H10" stroke="#8ea2d0" stroke-width="1"/></svg>
<div class="t" style="left:120px;top:346.37px;font-size:11.6px;color:#000000;">Person.ContactType</div>
<div style="position:absolute;left:84px;top:367px;width:9px;height:9px;background:linear-gradient(#ffffff,#e6e6e6);border:1px solid #969696;box-sizing:border-box;border-radius:1px"></div>
<div style="position:absolute;left:86px;top:371px;width:5px;height:1px;background:#202020"></div>
<div style="position:absolute;left:88px;top:369px;width:1px;height:5px;background:#202020"></div>
<svg style="position:absolute;left:101px;top:364px" width="12" height="11" viewBox="0 0 12 11"><rect x="0.5" y="0.5" width="11" height="10" fill="#e8eefa" stroke="#4a64a4"/><rect x="1" y="1" width="10" height="2" fill="#7896d6"/><path d="M2 4.5H5M7 4.5H10M2 6.5H5M7 6.5H10M2 8.5H5M7 8.5H10" stroke="#8ea2d0" stroke-width="1"/></svg>
<div class="t" style="left:120px;top:364.37px;font-size:11.6px;color:#000000;">Person.CountryRegion</div>
<div style="position:absolute;left:84px;top:385px;width:9px;height:9px;background:linear-gradient(#ffffff,#e6e6e6);border:1px solid #969696;box-sizing:border-box;border-radius:1px"></div>
<div style="position:absolute;left:86px;top:389px;width:5px;height:1px;background:#202020"></div>
<div style="position:absolute;left:88px;top:387px;width:1px;height:5px;background:#202020"></div>
<svg style="position:absolute;left:101px;top:382px" width="12" height="11" viewBox="0 0 12 11"><rect x="0.5" y="0.5" width="11" height="10" fill="#e8eefa" stroke="#4a64a4"/><rect x="1" y="1" width="10" height="2" fill="#7896d6"/><path d="M2 4.5H5M7 4.5H10M2 6.5H5M7 6.5H10M2 8.5H5M7 8.5H10" stroke="#8ea2d0" stroke-width="1"/></svg>
<div class="t" style="left:120px;top:382.37px;font-size:11.6px;color:#000000;">Person.EmailAddress</div>
<div style="position:absolute;left:84px;top:403px;width:9px;height:9px;background:linear-gradient(#ffffff,#e6e6e6);border:1px solid #969696;box-sizing:border-box;border-radius:1px"></div>
<div style="position:absolute;left:86px;top:407px;width:5px;height:1px;background:#202020"></div>
<div style="position:absolute;left:88px;top:405px;width:1px;height:5px;background:#202020"></div>
<svg style="position:absolute;left:101px;top:400px" width="12" height="11" viewBox="0 0 12 11"><rect x="0.5" y="0.5" width="11" height="10" fill="#e8eefa" stroke="#4a64a4"/><rect x="1" y="1" width="10" height="2" fill="#7896d6"/><path d="M2 4.5H5M7 4.5H10M2 6.5H5M7 6.5H10M2 8.5H5M7 8.5H10" stroke="#8ea2d0" stroke-width="1"/></svg>
<div class="t" style="left:120px;top:400.37px;font-size:11.6px;color:#000000;">Person.Password</div>
<div style="position:absolute;left:84px;top:421px;width:9px;height:9px;background:linear-gradient(#ffffff,#e6e6e6);border:1px solid #969696;box-sizing:border-box;border-radius:1px"></div>
<div style="position:absolute;left:86px;top:425px;width:5px;height:1px;background:#202020"></div>
<div style="position:absolute;left:88px;top:423px;width:1px;height:5px;background:#202020"></div>
<svg style="position:absolute;left:101px;top:418px" width="12" height="11" viewBox="0 0 12 11"><rect x="0.5" y="0.5" width="11" height="10" fill="#e8eefa" stroke="#4a64a4"/><rect x="1" y="1" width="10" height="2" fill="#7896d6"/><path d="M2 4.5H5M7 4.5H10M2 6.5H5M7 6.5H10M2 8.5H5M7 8.5H10" stroke="#8ea2d0" stroke-width="1"/></svg>
<div class="t" style="left:120px;top:418.37px;font-size:11.6px;color:#000000;">Person.Person</div>
<div style="position:absolute;left:84px;top:439px;width:9px;height:9px;background:linear-gradient(#ffffff,#e6e6e6);border:1px solid #969696;box-sizing:border-box;border-radius:1px"></div>
<div style="position:absolute;left:86px;top:443px;width:5px;height:1px;background:#202020"></div>
<div style="position:absolute;left:88px;top:441px;width:1px;height:5px;background:#202020"></div>
<svg style="position:absolute;left:101px;top:436px" width="12" height="11" viewBox="0 0 12 11"><rect x="0.5" y="0.5" width="11" height="10" fill="#e8eefa" stroke="#4a64a4"/><rect x="1" y="1" width="10" height="2" fill="#7896d6"/><path d="M2 4.5H5M7 4.5H10M2 6.5H5M7 6.5H10M2 8.5H5M7 8.5H10" stroke="#8ea2d0" stroke-width="1"/></svg>
<div class="t" style="left:120px;top:436.37px;font-size:11.6px;color:#000000;">Person.PersonPhone</div>
<div style="position:absolute;left:84px;top:457px;width:9px;height:9px;background:linear-gradient(#ffffff,#e6e6e6);border:1px solid #969696;box-sizing:border-box;border-radius:1px"></div>
<div style="position:absolute;left:86px;top:461px;width:5px;height:1px;background:#202020"></div>
<div style="position:absolute;left:88px;top:459px;width:1px;height:5px;background:#202020"></div>
<svg style="position:absolute;left:101px;top:454px" width="12" height="11" viewBox="0 0 12 11"><rect x="0.5" y="0.5" width="11" height="10" fill="#e8eefa" stroke="#4a64a4"/><rect x="1" y="1" width="10" height="2" fill="#7896d6"/><path d="M2 4.5H5M7 4.5H10M2 6.5H5M7 6.5H10M2 8.5H5M7 8.5H10" stroke="#8ea2d0" stroke-width="1"/></svg>
<div class="t" style="left:120px;top:454.37px;font-size:11.6px;color:#000000;">Person.PhoneNumberType</div>
<div style="position:absolute;left:84px;top:475px;width:9px;height:9px;background:linear-gradient(#ffffff,#e6e6e6);border:1px solid #969696;box-sizing:border-box;border-radius:1px"></div>
<div style="position:absolute;left:86px;top:479px;width:5px;height:1px;background:#202020"></div>
<div style="position:absolute;left:88px;top:477px;width:1px;height:5px;background:#202020"></div>
<svg style="position:absolute;left:101px;top:472px" width="12" height="11" viewBox="0 0 12 11"><rect x="0.5" y="0.5" width="11" height="10" fill="#e8eefa" stroke="#4a64a4"/><rect x="1" y="1" width="10" height="2" fill="#7896d6"/><path d="M2 4.5H5M7 4.5H10M2 6.5H5M7 6.5H10M2 8.5H5M7 8.5H10" stroke="#8ea2d0" stroke-width="1"/></svg>
<div class="t" style="left:120px;top:472.37px;font-size:11.6px;color:#000000;">Person.StateProvince</div>
<div style="position:absolute;left:84px;top:493px;width:9px;height:9px;background:linear-gradient(#ffffff,#e6e6e6);border:1px solid #969696;box-sizing:border-box;border-radius:1px"></div>
<div style="position:absolute;left:86px;top:497px;width:5px;height:1px;background:#202020"></div>
<div style="position:absolute;left:88px;top:495px;width:1px;height:5px;background:#202020"></div>
<svg style="position:absolute;left:101px;top:490px" width="12" height="11" viewBox="0 0 12 11"><rect x="0.5" y="0.5" width="11" height="10" fill="#e8eefa" stroke="#4a64a4"/><rect x="1" y="1" width="10" height="2" fill="#7896d6"/><path d="M2 4.5H5M7 4.5H10M2 6.5H5M7 6.5H10M2 8.5H5M7 8.5H10" stroke="#8ea2d0" stroke-width="1"/></svg>
<div class="t" style="left:120px;top:490.37px;font-size:11.6px;color:#000000;">Production.BillOfMaterials</div>
<div style="position:absolute;left:84px;top:511px;width:9px;height:9px;background:linear-gradient(#ffffff,#e6e6e6);border:1px solid #969696;box-sizing:border-box;border-radius:1px"></div>
<div style="position:absolute;left:86px;top:515px;width:5px;height:1px;background:#202020"></div>
<div style="position:absolute;left:88px;top:513px;width:1px;height:5px;background:#202020"></div>
<svg style="position:absolute;left:101px;top:508px" width="12" height="11" viewBox="0 0 12 11"><rect x="0.5" y="0.5" width="11" height="10" fill="#e8eefa" stroke="#4a64a4"/><rect x="1" y="1" width="10" height="2" fill="#7896d6"/><path d="M2 4.5H5M7 4.5H10M2 6.5H5M7 6.5H10M2 8.5H5M7 8.5H10" stroke="#8ea2d0" stroke-width="1"/></svg>
<div class="t" style="left:120px;top:508.37px;font-size:11.6px;color:#000000;">Production.Culture</div>
<div style="position:absolute;left:84px;top:529px;width:9px;height:9px;background:linear-gradient(#ffffff,#e6e6e6);border:1px solid #969696;box-sizing:border-box;border-radius:1px"></div>
<div style="position:absolute;left:86px;top:533px;width:5px;height:1px;background:#202020"></div>
<div style="position:absolute;left:88px;top:531px;width:1px;height:5px;background:#202020"></div>
<svg style="position:absolute;left:101px;top:526px" width="12" height="11" viewBox="0 0 12 11"><rect x="0.5" y="0.5" width="11" height="10" fill="#e8eefa" stroke="#4a64a4"/><rect x="1" y="1" width="10" height="2" fill="#7896d6"/><path d="M2 4.5H5M7 4.5H10M2 6.5H5M7 6.5H10M2 8.5H5M7 8.5H10" stroke="#8ea2d0" stroke-width="1"/></svg>
<div class="t" style="left:120px;top:526.37px;font-size:11.6px;color:#000000;">Production.Document</div>
</div>
<div style="position:absolute;left:349px;top:124px;width:17px;height:535px;background:#f0f0f0"></div>
<div style="position:absolute;left:350px;top:163px;width:15px;height:142px;background:linear-gradient(90deg,#e4e4e4,#f4f4f4 40%,#dcdcdc);border:1px solid #a8a8a8;border-radius:2px;box-sizing:border-box"></div>
<div style="position:absolute;left:354px;top:230px;width:7px;height:1px;background:#4a4a4a"></div>
<div style="position:absolute;left:354px;top:232px;width:7px;height:1px;background:#4a4a4a"></div>
<div style="position:absolute;left:354px;top:234px;width:7px;height:1px;background:#4a4a4a"></div>
<div style="position:absolute;left:354px;top:236px;width:7px;height:1px;background:#4a4a4a"></div>
<svg style="position:absolute;left:354px;top:131px" width="8" height="4" viewBox="0 0 8 4"><path d="M0.5 4H7.5L4 0.5Z" fill="#303030"/></svg>
<svg style="position:absolute;left:354px;top:648px" width="8" height="4" viewBox="0 0 8 4"><path d="M0 0H8L4 4Z" fill="#303030"/></svg>
<div style="position:absolute;left:3px;top:659px;width:363px;height:17px;background:#f0f0f0"></div>
<div style="position:absolute;left:22px;top:659px;width:267px;height:15px;background:linear-gradient(#f4f4f4,#e8e8e8 50%,#d8d8d8);border:1px solid #a8a8a8;border-radius:2px;box-sizing:border-box"></div>
<svg style="position:absolute;left:10px;top:663px" width="4" height="8" viewBox="0 0 4 8"><path d="M4 0V8L0 4Z" fill="#404040"/></svg>
<svg style="position:absolute;left:338px;top:663px" width="4" height="8" viewBox="0 0 4 8"><path d="M0 0V8L4 4Z" fill="#404040"/></svg>
<div style="position:absolute;left:348px;top:659px;width:18px;height:17px;background:#f6f6f6"></div>
<div style="position:absolute;left:152px;top:664px;width:1px;height:5px;background:#5a5a5a"></div>
<div style="position:absolute;left:154px;top:664px;width:1px;height:5px;background:#5a5a5a"></div>
<div style="position:absolute;left:156px;top:664px;width:1px;height:5px;background:#5a5a5a"></div>
<div style="position:absolute;left:374px;top:78px;width:243px;height:21px;background:linear-gradient(#fffcf2,#fff3d0);border-radius:2px 2px 0 0"></div>
<div style="position:absolute;left:374px;top:78px;width:218px;height:20px;overflow:hidden">
<div class="t" style="left:3px;top:4.37px;font-size:11.6px;color:#000;">SQLQuery2.sql - rdtfGhWxyg.BQLGhjkg (SA))))</div>
</div>
<svg style="position:absolute;left:370px;top:80px" width="230" height="20" viewBox="0 0 230 20"><path d="M10 8.4C25 8 40 8 58 8.5C70 10 85 10 110 9.8C130 9 150 9.5 175 9.3C195 9 205 8.6 216.5 8.8" stroke="#4347cf" stroke-width="9.2" stroke-linecap="round" fill="none"/></svg>
<svg style="position:absolute;left:602px;top:85px" width="10" height="9" viewBox="0 0 10 9"><path d="M1 1L9 8M9 1L1 8" stroke="#6a5e3a" stroke-width="1.6"/></svg>
<div style="position:absolute;left:374px;top:98px;width:961px;height:3px;background:linear-gradient(#fff0c4,#fff6dc)"></div>
<div style="position:absolute;left:374px;top:101px;width:961px;height:212px;background:#ffffff"></div>
<div style="position:absolute;left:374px;top:101px;width:17px;height:212px;background:linear-gradient(90deg,#efeff1,#f3f3f4 55%,#f7f7f7)"></div>
<div style="position:absolute;left:374px;top:101px;width:945px;height:2px;background:linear-gradient(#fff9ea,#fffdf8)"></div>
<div class="m" style="left:412px;top:103px"><span style="color:#008000">/****** Script for SelectTopNRows command from SSMS  ******/</span>
<span style="color:#1a1aa6">SELECT</span> <span style="color:#1a1aa6">TOP</span> <span style="color:#000">1000</span> <span style="color:#008080">[AddressID]</span>
      <span style="color:#808080">,</span><span style="color:#008080">[AddressLine1]</span>
      <span style="color:#808080">,</span><span style="color:#008080">[AddressLine2]</span>
      <span style="color:#808080">,</span><span style="color:#008080">[City]</span>
      <span style="color:#808080">,</span><span style="color:#008080">[StateProvinceID]</span>
      <span style="color:#808080">,</span><span style="color:#008080">[PostalCode]</span>
      <span style="color:#808080">,</span><span style="color:#008080">[SpatialLocation]</span>
      <span style="color:#808080">,</span><span style="color:#008080">[rowguid]</span>
      <span style="color:#808080">,</span><span style="color:#008080">[ModifiedDate]</span>
  <span style="color:#1a1aa6">FROM</span> <span style="color:#008080">[AdventureWorks2012]</span><span style="color:#808080">.</span><span style="color:#008080">[Person]</span><span style="color:#808080">.</span><span style="color:#008080">[Address]</span></div>
<div style="position:absolute;left:401px;top:122px;width:9px;height:9px;border:1px solid #8a8a8a;box-sizing:border-box;background:#fff"></div>
<div style="position:absolute;left:403px;top:126px;width:5px;height:1px;background:#404040"></div>
<div style="position:absolute;left:406px;top:131px;width:1px;height:146px;background:#a0a0a0"></div>
<div style="position:absolute;left:406px;top:276px;width:5px;height:1px;background:#a0a0a0"></div>
<div style="position:absolute;left:1319px;top:101px;width:16px;height:212px;background:#f0f0f0"></div>
<div style="position:absolute;left:1320px;top:102px;width:15px;height:16px;background:linear-gradient(#fafafa,#e0e0e0);border:1px solid #b0b0b0;box-sizing:border-box"></div>
<div style="position:absolute;left:1322px;top:108px;width:11px;height:1px;background:#111"></div>
<div style="position:absolute;left:1322px;top:111px;width:11px;height:1px;background:#111"></div>
<svg style="position:absolute;left:1324px;top:103px" width="7" height="5" viewBox="0 0 7 5"><path d="M0.5 3.5L3.5 0.5L6.5 3.5Z" fill="#111"/><path d="M3.5 3V5" stroke="#111"/></svg>
<svg style="position:absolute;left:1324px;top:112px" width="7" height="5" viewBox="0 0 7 5"><path d="M0.5 1.5L3.5 4.5L6.5 1.5Z" fill="#111"/><path d="M3.5 0V2" stroke="#111"/></svg>
<svg style="position:absolute;left:1324px;top:126px" width="7" height="4" viewBox="0 0 7 4"><path d="M0 4H7L3.5 0Z" fill="#909090"/></svg>
<div style="position:absolute;left:1320px;top:137px;width:14px;height:88px;background:linear-gradient(90deg,#e6e6e6,#f6f6f6 40%,#dadada);border:1px solid #a8a8a8;border-radius:2px;box-sizing:border-box"></div>
<div style="position:absolute;left:1324px;top:177px;width:6px;height:1px;background:#5a5a5a"></div>
<div style="position:absolute;left:1324px;top:179px;width:6px;height:1px;background:#5a5a5a"></div>
<div style="position:absolute;left:1324px;top:181px;width:6px;height:1px;background:#5a5a5a"></div>
<svg style="position:absolute;left:1324px;top:302px" width="7" height="4" viewBox="0 0 7 4"><path d="M0 0H7L3.5 4Z" fill="#909090"/></svg>
<div style="position:absolute;left:374px;top:313px;width:961px;height:16px;background:#f0f0f0"></div>
<div style="position:absolute;left:374px;top:313px;width:59px;height:16px;background:#ffffff"></div>
<div class="t" style="left:379px;top:316.95px;font-size:10.9px;color:#000;">100 %</div>
<svg style="position:absolute;left:424px;top:320px" width="7" height="4" viewBox="0 0 7 4"><path d="M0 0H7L3.5 4Z" fill="#202020"/></svg>
<svg style="position:absolute;left:440px;top:317px" width="4" height="7" viewBox="0 0 4 7"><path d="M4 0V7L0 3.5Z" fill="#909090"/></svg>
<svg style="position:absolute;left:1306px;top:317px" width="4" height="7" viewBox="0 0 4 7"><path d="M0 0V7L4 3.5Z" fill="#606060"/></svg>
<div style="position:absolute;left:1319px;top:313px;width:16px;height:16px;background:#ffffff"></div>
<div style="position:absolute;left:374px;top:329px;width:961px;height:320px;background:#f0f0f0"></div>
<div style="position:absolute;left:447px;top:355px;width:885px;height:1px;background:#a0a0a0"></div>
<div style="position:absolute;left:447px;top:336px;width:96px;height:19px;background:linear-gradient(#f4f4f4,#e0e0e0);border:1px solid #a0a0a0;border-bottom:none;box-sizing:border-box"></div>
<div style="position:absolute;left:544px;top:336px;width:80px;height:19px;background:linear-gradient(#f4f4f4,#e0e0e0);border:1px solid #a0a0a0;border-bottom:none;box-sizing:border-box"></div>
<div style="position:absolute;left:374px;top:334px;width:73px;height:23px;background:#fbfbfb;border:1px solid #a0a0a0;border-bottom:none;box-sizing:border-box"></div>
<svg style="position:absolute;left:383px;top:338px" width="14" height="13" viewBox="0 0 14 13"><rect x="0.5" y="0.5" width="13" height="12" fill="#f4f6fb" stroke="#4e5e88"/><rect x="1" y="1" width="12" height="2" fill="#6f86c0"/><path d="M5 3V12M9 3V12M1 6.5H13M1 9.5H13" stroke="#9aa8c8"/></svg>
<div class="t" style="left:404px;top:340.86px;font-size:10.4px;color:#000;">Results</div>
<svg style="position:absolute;left:451px;top:338px" width="17" height="17" viewBox="0 0 17 17"><circle cx="8.5" cy="8.5" r="8" fill="#1f5f96"/><path d="M3 3.5C5 2.5 7 3 8 4.5C7.5 6 6 6.5 5.5 8.5C4.5 9 3.5 8 2.5 7C2.5 5.5 2.6 4.5 3 3.5Z" fill="#d4eaf6"/><path d="M9.5 8C11 8 12.5 9 12.5 10.5C12 12 11 13 10.5 15C9.5 14 9 12.5 9 11C8.5 10 8.8 9 9.5 8Z" fill="#d4eaf6"/><path d="M11 2.5C12.5 3 13.5 4 14 5L12.5 5.5Z" fill="#bfe0f0"/><circle cx="8.5" cy="8.5" r="8" fill="none" stroke="#164a78" stroke-width="0.8"/></svg>
<div class="t" style="left:473px;top:342.53px;font-size:10.2px;color:#000;">Spatial results</div>
<svg style="position:absolute;left:551px;top:337px" width="16" height="18" viewBox="0 0 16 18"><rect x="1.5" y="0.5" width="6" height="15" fill="#eef3fa" stroke="#7a8aa2"/><rect x="2" y="1" width="5" height="3" fill="#6f9ad8"/><path d="M6.5 7.5H12.5L14.5 9.5V17.5H6.5Z" fill="#ffffff" stroke="#5a6476"/><path d="M8 10.5H12M8 12.5H13M8 14.5H13" stroke="#3a4050"/></svg>
<div class="t" style="left:572px;top:342.45px;font-size:10.3px;color:#000;">Messages</div>
<div style="position:absolute;left:378px;top:357px;width:954px;height:292px;background:#ffffff;border:1px solid #a0a0a0;box-sizing:border-box"></div>
<div style="position:absolute;left:379px;top:358px;width:935px;height:271px;overflow:hidden;background:#fff">
<div style="position:absolute;left:0px;top:0px;width:1100px;height:16px;background:linear-gradient(#ffffff,#f3f3f3 60%,#e8e8e8)"></div>
<div style="position:absolute;left:0px;top:16px;width:1100px;height:1px;background:#d6d6d6"></div>
<div style="position:absolute;left:220px;top:17px;width:82px;height:300px;background:#fffde6"></div>
<div style="position:absolute;left:0px;top:17px;width:31px;height:19px;background:linear-gradient(#f8f8f8,#f1f1f1 75%,#e6e6e6);border-bottom:1px solid #c4c4c4;box-sizing:border-box"></div>
<div style="position:absolute;left:0px;top:36px;width:31px;height:19px;background:linear-gradient(#f8f8f8,#f1f1f1 75%,#e6e6e6);border-bottom:1px solid #c4c4c4;box-sizing:border-box"></div>
<div style="position:absolute;left:0px;top:55px;width:31px;height:19px;background:linear-gradient(#f8f8f8,#f1f1f1 75%,#e6e6e6);border-bottom:1px solid #c4c4c4;box-sizing:border-box"></div>
<div style="position:absolute;left:0px;top:74px;width:31px;height:19px;background:linear-gradient(#f8f8f8,#f1f1f1 75%,#e6e6e6);border-bottom:1px solid #c4c4c4;box-sizing:border-box"></div>
<div style="position:absolute;left:0px;top:93px;width:31px;height:19px;background:linear-gradient(#f8f8f8,#f1f1f1 75%,#e6e6e6);border-bottom:1px solid #c4c4c4;box-sizing:border-box"></div>
<div style="position:absolute;left:0px;top:112px;width:31px;height:19px;background:linear-gradient(#f8f8f8,#f1f1f1 75%,#e6e6e6);border-bottom:1px solid #c4c4c4;box-sizing:border-box"></div>
<div style="position:absolute;left:0px;top:131px;width:31px;height:19px;background:linear-gradient(#f8f8f8,#f1f1f1 75%,#e6e6e6);border-bottom:1px solid #c4c4c4;box-sizing:border-box"></div>
<div style="position:absolute;left:0px;top:150px;width:31px;height:19px;background:linear-gradient(#f8f8f8,#f1f1f1 75%,#e6e6e6);border-bottom:1px solid #c4c4c4;box-sizing:border-box"></div>
<div style="position:absolute;left:0px;top:169px;width:31px;height:19px;background:linear-gradient(#f8f8f8,#f1f1f1 75%,#e6e6e6);border-bottom:1px solid #c4c4c4;box-sizing:border-box"></div>
<div style="position:absolute;left:0px;top:188px;width:31px;height:19px;background:linear-gradient(#f8f8f8,#f1f1f1 75%,#e6e6e6);border-bottom:1px solid #c4c4c4;box-sizing:border-box"></div>
<div style="position:absolute;left:0px;top:207px;width:31px;height:19px;background:linear-gradient(#f8f8f8,#f1f1f1 75%,#e6e6e6);border-bottom:1px solid #c4c4c4;box-sizing:border-box"></div>
<div style="position:absolute;left:0px;top:226px;width:31px;height:19px;background:linear-gradient(#f8f8f8,#f1f1f1 75%,#e6e6e6);border-bottom:1px solid #c4c4c4;box-sizing:border-box"></div>
<div style="position:absolute;left:0px;top:245px;width:31px;height:19px;background:linear-gradient(#f8f8f8,#f1f1f1 75%,#e6e6e6);border-bottom:1px solid #c4c4c4;box-sizing:border-box"></div>
<div style="position:absolute;left:0px;top:264px;width:31px;height:19px;background:linear-gradient(#f8f8f8,#f1f1f1 75%,#e6e6e6);border-bottom:1px solid #c4c4c4;box-sizing:border-box"></div>
<div style="position:absolute;left:31px;top:0px;width:1px;height:16px;background:#e0e0e0"></div>
<div style="position:absolute;left:31px;top:17px;width:1px;height:300px;background:#ececec"></div>
<div style="position:absolute;left:98px;top:0px;width:1px;height:16px;background:#e0e0e0"></div>
<div style="position:absolute;left:98px;top:17px;width:1px;height:300px;background:#ececec"></div>
<div style="position:absolute;left:219px;top:0px;width:1px;height:16px;background:#e0e0e0"></div>
<div style="position:absolute;left:219px;top:17px;width:1px;height:300px;background:#ececec"></div>
<div style="position:absolute;left:302px;top:0px;width:1px;height:16px;background:#e0e0e0"></div>
<div style="position:absolute;left:302px;top:17px;width:1px;height:300px;background:#ececec"></div>
<div style="position:absolute;left:350px;top:0px;width:1px;height:16px;background:#e0e0e0"></div>
<div style="position:absolute;left:350px;top:17px;width:1px;height:300px;background:#ececec"></div>
<div style="position:absolute;left:445px;top:0px;width:1px;height:16px;background:#e0e0e0"></div>
<div style="position:absolute;left:445px;top:17px;width:1px;height:300px;background:#ececec"></div>
<div style="position:absolute;left:518px;top:0px;width:1px;height:16px;background:#e0e0e0"></div>
<div style="position:absolute;left:518px;top:17px;width:1px;height:300px;background:#ececec"></div>
<div style="position:absolute;left:825px;top:0px;width:1px;height:16px;background:#e0e0e0"></div>
<div style="position:absolute;left:825px;top:17px;width:1px;height:300px;background:#ececec"></div>
<div style="position:absolute;left:31px;top:35px;width:1100px;height:1px;background:#ececec"></div>
<div style="position:absolute;left:31px;top:54px;width:1100px;height:1px;background:#ececec"></div>
<div style="position:absolute;left:31px;top:73px;width:1100px;height:1px;background:#ececec"></div>
<div style="position:absolute;left:31px;top:92px;width:1100px;height:1px;background:#ececec"></div>
<div style="position:absolute;left:31px;top:111px;width:1100px;height:1px;background:#ececec"></div>
<div style="position:absolute;left:31px;top:130px;width:1100px;height:1px;background:#ececec"></div>
<div style="position:absolute;left:31px;top:149px;width:1100px;height:1px;background:#ececec"></div>
<div style="position:absolute;left:31px;top:168px;width:1100px;height:1px;background:#ececec"></div>
<div style="position:absolute;left:31px;top:187px;width:1100px;height:1px;background:#ececec"></div>
<div style="position:absolute;left:31px;top:206px;width:1100px;height:1px;background:#ececec"></div>
<div style="position:absolute;left:31px;top:225px;width:1100px;height:1px;background:#ececec"></div>
<div style="position:absolute;left:31px;top:244px;width:1100px;height:1px;background:#ececec"></div>
<div style="position:absolute;left:31px;top:263px;width:1100px;height:1px;background:#ececec"></div>
<div style="position:absolute;left:31px;top:282px;width:1100px;height:1px;background:#ececec"></div>
<div class="t" style="left:36px;top:4.28px;font-size:10.5px;color:#000;">AddressID</div>
<div class="t" style="left:103px;top:4.28px;font-size:10.5px;color:#000;">AddressLine1</div>
<div class="t" style="left:224px;top:4.28px;font-size:10.5px;color:#000;">AddressLine2</div>
<div class="t" style="left:307px;top:4.28px;font-size:10.5px;color:#000;">City</div>
<div class="t" style="left:355px;top:4.28px;font-size:10.5px;color:#000;">StateProvinceID</div>
<div class="t" style="left:450px;top:4.28px;font-size:10.5px;color:#000;">PostalCode</div>
<div class="t" style="left:523px;top:4.28px;font-size:10.5px;color:#000;">SpatialLocation</div>
<div class="t" style="left:830px;top:4.28px;font-size:10.5px;color:#000;">rowguid</div>
<div style="position:absolute;left:32px;top:18px;width:66px;height:19px;background:#e6eaee;outline:1px dotted #202020;outline-offset:-1px"></div>
<div class="t" style="left:7px;top:23.08px;font-size:10.5px;color:#000;">1</div>
<div class="t" style="left:39px;top:23.08px;font-size:10.5px;color:#000;">1</div>
<div class="t" style="left:106px;top:23.08px;font-size:10.5px;color:#000;">1970 Napa Ct.</div>
<div class="t" style="left:227px;top:23.08px;font-size:10.5px;color:#000;">NULL</div>
<div class="t" style="left:310px;top:23.08px;font-size:10.5px;color:#000;">Bothell</div>
<div class="t" style="left:357px;top:23.08px;font-size:10.5px;color:#000;">79</div>
<div class="t" style="left:453px;top:23.08px;font-size:10.5px;color:#000;">98011</div>
<div class="t" style="left:525px;top:23.08px;font-size:10.5px;color:#000;">0xE6100000010CAE8BFC28BCE4474067A89189898A5EC0</div>
<div class="t" style="left:833px;top:23.08px;font-size:10.5px;color:#000;">9AADCB0D-36CF-483F-84D8</div>
<div class="t" style="left:7px;top:42.08px;font-size:10.5px;color:#000;">2</div>
<div class="t" style="left:39px;top:42.08px;font-size:10.5px;color:#000;">2</div>
<div class="t" style="left:106px;top:42.08px;font-size:10.5px;color:#000;">9833 Mt. Dias Blv.</div>
<div class="t" style="left:227px;top:42.08px;font-size:10.5px;color:#000;">NULL</div>
<div class="t" style="left:310px;top:42.08px;font-size:10.5px;color:#000;">Bothell</div>
<div class="t" style="left:357px;top:42.08px;font-size:10.5px;color:#000;">79</div>
<div class="t" style="left:453px;top:42.08px;font-size:10.5px;color:#000;">98011</div>
<div class="t" style="left:525px;top:42.08px;font-size:10.5px;color:#000;">0xE6100000010CD6FA851AE6D74740BC262A0A03905EC0</div>
<div class="t" style="left:833px;top:42.08px;font-size:10.5px;color:#000;">32A54B9E-E034-4BFB-B573</div>
<div class="t" style="left:7px;top:61.08px;font-size:10.5px;color:#000;">3</div>
<div class="t" style="left:39px;top:61.08px;font-size:10.5px;color:#000;">3</div>
<div class="t" style="left:106px;top:61.08px;font-size:10.5px;color:#000;">7484 Roundtree Drive</div>
<div class="t" style="left:227px;top:61.08px;font-size:10.5px;color:#000;">NULL</div>
<div class="t" style="left:310px;top:61.08px;font-size:10.5px;color:#000;">Bothell</div>
<div class="t" style="left:357px;top:61.08px;font-size:10.5px;color:#000;">79</div>
<div class="t" style="left:453px;top:61.08px;font-size:10.5px;color:#000;">98011</div>
<div class="t" style="left:525px;top:61.08px;font-size:10.5px;color:#000;">0xE6100000010C18E304C4ADE14740DA930C7893915EC0</div>
<div class="t" style="left:833px;top:61.08px;font-size:10.5px;color:#000;">4C506923-6D1B-452C-A07C</div>
<div class="t" style="left:7px;top:80.08px;font-size:10.5px;color:#000;">4</div>
<div class="t" style="left:39px;top:80.08px;font-size:10.5px;color:#000;">4</div>
<div class="t" style="left:106px;top:80.08px;font-size:10.5px;color:#000;">9539 Glenside Dr</div>
<div class="t" style="left:227px;top:80.08px;font-size:10.5px;color:#000;">NULL</div>
<div class="t" style="left:310px;top:80.08px;font-size:10.5px;color:#000;">Bothell</div>
<div class="t" style="left:357px;top:80.08px;font-size:10.5px;color:#000;">79</div>
<div class="t" style="left:453px;top:80.08px;font-size:10.5px;color:#000;">98011</div>
<div class="t" style="left:525px;top:80.08px;font-size:10.5px;color:#000;">0xE6100000010C813A0D5F9FDE474011A5C28A7C955EC0</div>
<div class="t" style="left:833px;top:80.08px;font-size:10.5px;color:#000;">E5946C78-4BCC-477F-9FA1</div>
<div class="t" style="left:7px;top:99.08px;font-size:10.5px;color:#000;">5</div>
<div class="t" style="left:39px;top:99.08px;font-size:10.5px;color:#000;">5</div>
<div class="t" style="left:106px;top:99.08px;font-size:10.5px;color:#000;">1226 Shoe St.</div>
<div class="t" style="left:227px;top:99.08px;font-size:10.5px;color:#000;">NULL</div>
<div class="t" style="left:310px;top:99.08px;font-size:10.5px;color:#000;">Bothell</div>
<div class="t" style="left:357px;top:99.08px;font-size:10.5px;color:#000;">79</div>
<div class="t" style="left:453px;top:99.08px;font-size:10.5px;color:#000;">98011</div>
<div class="t" style="left:525px;top:99.08px;font-size:10.5px;color:#000;">0xE6100000010C61C64D8ABBD94740C460EA3FD8855EC0</div>
<div class="t" style="left:833px;top:99.08px;font-size:10.5px;color:#000;">FBAFF937-4A97-4AF0-81FD</div>
<div class="t" style="left:7px;top:118.08px;font-size:10.5px;color:#000;">6</div>
<div class="t" style="left:39px;top:118.08px;font-size:10.5px;color:#000;">6</div>
<div class="t" style="left:106px;top:118.08px;font-size:10.5px;color:#000;">1399 Firestone Drive</div>
<div class="t" style="left:227px;top:118.08px;font-size:10.5px;color:#000;">NULL</div>
<div class="t" style="left:310px;top:118.08px;font-size:10.5px;color:#000;">Bothell</div>
<div class="t" style="left:357px;top:118.08px;font-size:10.5px;color:#000;">79</div>
<div class="t" style="left:453px;top:118.08px;font-size:10.5px;color:#000;">98011</div>
<div class="t" style="left:525px;top:118.08px;font-size:10.5px;color:#000;">0xE6100000010CE0B4E50458DA47402F12A5F80C975EC0</div>
<div class="t" style="left:833px;top:118.08px;font-size:10.5px;color:#000;">FEBF8191-9804-44C8-877A</div>
<div class="t" style="left:7px;top:137.08px;font-size:10.5px;color:#000;">7</div>
<div class="t" style="left:39px;top:137.08px;font-size:10.5px;color:#000;">7</div>
<div class="t" style="left:106px;top:137.08px;font-size:10.5px;color:#000;">5672 Hale Dr.</div>
<div class="t" style="left:227px;top:137.08px;font-size:10.5px;color:#000;">NULL</div>
<div class="t" style="left:310px;top:137.08px;font-size:10.5px;color:#000;">Bothell</div>
<div class="t" style="left:357px;top:137.08px;font-size:10.5px;color:#000;">79</div>
<div class="t" style="left:453px;top:137.08px;font-size:10.5px;color:#000;">98011</div>
<div class="t" style="left:525px;top:137.08px;font-size:10.5px;color:#000;">0xE6100000010C18E304C4ADE1474011A5C28A7C955EC0</div>
<div class="t" style="left:833px;top:137.08px;font-size:10.5px;color:#000;">0175A174-6C34-4D41-B3C1</div>
<div class="t" style="left:7px;top:156.08px;font-size:10.5px;color:#000;">8</div>
<div class="t" style="left:39px;top:156.08px;font-size:10.5px;color:#000;">8</div>
<div class="t" style="left:106px;top:156.08px;font-size:10.5px;color:#000;">6387 Scenic Avenue</div>
<div class="t" style="left:227px;top:156.08px;font-size:10.5px;color:#000;">NULL</div>
<div class="t" style="left:310px;top:156.08px;font-size:10.5px;color:#000;">Bothell</div>
<div class="t" style="left:357px;top:156.08px;font-size:10.5px;color:#000;">79</div>
<div class="t" style="left:453px;top:156.08px;font-size:10.5px;color:#000;">98011</div>
<div class="t" style="left:525px;top:156.08px;font-size:10.5px;color:#000;">0xE6100000010C0029A5D93BDF4740E248962FD5975EC0</div>
<div class="t" style="left:833px;top:156.08px;font-size:10.5px;color:#000;">3715E813-4DCA-49E0-8F1C</div>
<div class="t" style="left:7px;top:175.08px;font-size:10.5px;color:#000;">9</div>
<div class="t" style="left:39px;top:175.08px;font-size:10.5px;color:#000;">9</div>
<div class="t" style="left:106px;top:175.08px;font-size:10.5px;color:#000;">8713 Yosemite Ct.</div>
<div class="t" style="left:227px;top:175.08px;font-size:10.5px;color:#000;">NULL</div>
<div class="t" style="left:310px;top:175.08px;font-size:10.5px;color:#000;">Bothell</div>
<div class="t" style="left:357px;top:175.08px;font-size:10.5px;color:#000;">79</div>
<div class="t" style="left:453px;top:175.08px;font-size:10.5px;color:#000;">98011</div>
<div class="t" style="left:525px;top:175.08px;font-size:10.5px;color:#000;">0xE6100000010C6A80AD742DDC4740851574F7198C5EC0</div>
<div class="t" style="left:833px;top:175.08px;font-size:10.5px;color:#000;">268AF621-76D7-4C78-9441</div>
<div class="t" style="left:7px;top:194.08px;font-size:10.5px;color:#000;">10</div>
<div class="t" style="left:39px;top:194.08px;font-size:10.5px;color:#000;">10</div>
<div class="t" style="left:106px;top:194.08px;font-size:10.5px;color:#000;">250 Race Court</div>
<div class="t" style="left:227px;top:194.08px;font-size:10.5px;color:#000;">NULL</div>
<div class="t" style="left:310px;top:194.08px;font-size:10.5px;color:#000;">Bothell</div>
<div class="t" style="left:357px;top:194.08px;font-size:10.5px;color:#000;">79</div>
<div class="t" style="left:453px;top:194.08px;font-size:10.5px;color:#000;">98011</div>
<div class="t" style="left:525px;top:194.08px;font-size:10.5px;color:#000;">0xE6100000010C219D64AE1FE4474040862564B7825EC0</div>
<div class="t" style="left:833px;top:194.08px;font-size:10.5px;color:#000;">0B6B739D-8EB6-4378-8D55</div>
<div class="t" style="left:7px;top:213.08px;font-size:10.5px;color:#000;">11</div>
<div class="t" style="left:39px;top:213.08px;font-size:10.5px;color:#000;">11</div>
<div class="t" style="left:106px;top:213.08px;font-size:10.5px;color:#000;">1318 Lasalle Street</div>
<div class="t" style="left:227px;top:213.08px;font-size:10.5px;color:#000;">NULL</div>
<div class="t" style="left:310px;top:213.08px;font-size:10.5px;color:#000;">Bothell</div>
<div class="t" style="left:357px;top:213.08px;font-size:10.5px;color:#000;">79</div>
<div class="t" style="left:453px;top:213.08px;font-size:10.5px;color:#000;">98011</div>
<div class="t" style="left:525px;top:213.08px;font-size:10.5px;color:#000;">0xE6100000010CCEFFBBFD9FE9474057B9479C728E5EC0</div>
<div class="t" style="left:833px;top:213.08px;font-size:10.5px;color:#000;">981B3303-ACA2-49C7-9A96</div>
<div class="t" style="left:7px;top:232.08px;font-size:10.5px;color:#000;">12</div>
<div class="t" style="left:39px;top:232.08px;font-size:10.5px;color:#000;">12</div>
<div class="t" style="left:106px;top:232.08px;font-size:10.5px;color:#000;">5415 San Gabriel Dr.</div>
<div class="t" style="left:227px;top:232.08px;font-size:10.5px;color:#000;">NULL</div>
<div class="t" style="left:310px;top:232.08px;font-size:10.5px;color:#000;">Bothell</div>
<div class="t" style="left:357px;top:232.08px;font-size:10.5px;color:#000;">79</div>
<div class="t" style="left:453px;top:232.08px;font-size:10.5px;color:#000;">98011</div>
<div class="t" style="left:525px;top:232.08px;font-size:10.5px;color:#000;">0xE6100000010C6A80AD742DDC474011A5C28A7C955EC0</div>
<div class="t" style="left:833px;top:232.08px;font-size:10.5px;color:#000;">1C2C9CFE-AB9F-4F96-8E54</div>
<div class="t" style="left:7px;top:251.08px;font-size:10.5px;color:#000;">13</div>
<div class="t" style="left:39px;top:251.08px;font-size:10.5px;color:#000;">13</div>
<div class="t" style="left:106px;top:251.08px;font-size:10.5px;color:#000;">9265 La Paz</div>
<div class="t" style="left:227px;top:251.08px;font-size:10.5px;color:#000;">NULL</div>
<div class="t" style="left:310px;top:251.08px;font-size:10.5px;color:#000;">Bothell</div>
<div class="t" style="left:357px;top:251.08px;font-size:10.5px;color:#000;">79</div>
<div class="t" style="left:453px;top:251.08px;font-size:10.5px;color:#000;">98011</div>
<div class="t" style="left:525px;top:251.08px;font-size:10.5px;color:#000;">0xE6100000010CC3228C0867E84740F3BC169B7F835EC0</div>
<div class="t" style="left:833px;top:251.08px;font-size:10.5px;color:#000;">E0BA2F52-C907-4553-9A4C</div>
<div class="t" style="left:7px;top:270.08px;font-size:10.5px;color:#000;">14</div>
<div class="t" style="left:39px;top:270.08px;font-size:10.5px;color:#000;">14</div>
<div class="t" style="left:106px;top:270.08px;font-size:10.5px;color:#000;">8157 W. Book</div>
<div class="t" style="left:227px;top:270.08px;font-size:10.5px;color:#000;">NULL</div>
<div class="t" style="left:310px;top:270.08px;font-size:10.5px;color:#000;">Bothell</div>
<div class="t" style="left:357px;top:270.08px;font-size:10.5px;color:#000;">79</div>
<div class="t" style="left:453px;top:270.08px;font-size:10.5px;color:#000;">98011</div>
<div class="t" style="left:525px;top:270.08px;font-size:10.5px;color:#000;">0xE6100000010C0029A5D93BDF4740E248962FD5975EC0</div>
<div class="t" style="left:833px;top:270.08px;font-size:10.5px;color:#000;">6C28A1A6-0E8D-4D27-A0DC</div>
</div>
<div style="position:absolute;left:1314px;top:358px;width:17px;height:271px;background:#f4f4f4"></div>
<svg style="position:absolute;left:1319px;top:365px" width="8" height="4" viewBox="0 0 8 4"><path d="M0 4H8L4 0Z" fill="#303030"/></svg>
<div style="position:absolute;left:1315px;top:376px;width:15px;height:16px;background:linear-gradient(90deg,#e8e8e8,#f8f8f8 40%,#dcdcdc);border:1px solid #a8a8a8;border-radius:2px;box-sizing:border-box"></div>
<svg style="position:absolute;left:1319px;top:617px" width="8" height="4" viewBox="0 0 8 4"><path d="M0 0H8L4 4Z" fill="#303030"/></svg>
<div style="position:absolute;left:379px;top:629px;width:935px;height:16px;background:#f4f4f4"></div>
<svg style="position:absolute;left:385px;top:634px" width="3" height="6" viewBox="0 0 3 6"><path d="M3 0V6L0 3Z" fill="#505050"/></svg>
<div style="position:absolute;left:397px;top:629px;width:694px;height:15px;background:linear-gradient(#f8f8f8,#ececec 50%,#d6d6d6);border:1px solid #a8a8a8;border-radius:2px;box-sizing:border-box"></div>
<div style="position:absolute;left:741px;top:634px;width:1px;height:5px;background:#5a5a5a"></div>
<div style="position:absolute;left:743px;top:634px;width:1px;height:5px;background:#5a5a5a"></div>
<div style="position:absolute;left:745px;top:634px;width:1px;height:5px;background:#5a5a5a"></div>
<svg style="position:absolute;left:1302px;top:633px" width="4" height="8" viewBox="0 0 4 8"><path d="M0 0V8L4 4Z" fill="#303030"/></svg>
<div style="position:absolute;left:1314px;top:629px;width:17px;height:16px;background:#fafafa"></div>
<div style="position:absolute;left:374px;top:649px;width:961px;height:27px;background:#ede48a"></div>
<div style="position:absolute;left:374px;top:649px;width:961px;height:2px;background:#fbf8dc"></div>
<div style="position:absolute;left:374px;top:673px;width:961px;height:3px;background:#fbf6d4"></div>
<svg style="position:absolute;left:377px;top:654px" width="16" height="16" viewBox="0 0 16 16"><defs><radialGradient id="ok" cx="0.4" cy="0.25" r="0.85"><stop offset="0" stop-color="#a8e890"/><stop offset="0.55" stop-color="#3c9c3a"/><stop offset="1" stop-color="#1f661f"/></radialGradient></defs><circle cx="8" cy="8" r="7.6" fill="url(#ok)" stroke="#2a602a" stroke-width="0.7"/><path d="M3.8 8.3L6.8 11.2L12.3 4.8" stroke="#f4fff0" stroke-width="1.8" fill="none"/></svg>
<div class="t" style="left:397px;top:656.37px;font-size:11.6px;color:#000;">Query executed successfully.</div>
<div style="position:absolute;left:813px;top:654px;width:1px;height:16px;background:#c8c088"></div>
<div class="t" style="left:818px;top:656.37px;font-size:11.6px;color:#000;">C</div>
<div style="position:absolute;left:1080px;top:654px;width:1px;height:16px;background:#c8c088"></div>
<div class="t" style="left:1085px;top:656.37px;font-size:11.6px;color:#000;">AdventureWorks2012</div>
<div style="position:absolute;left:1204px;top:654px;width:1px;height:16px;background:#c8c088"></div>
<div class="t" style="left:1209px;top:656.37px;font-size:11.6px;color:#000;">00:00:00</div>
<div style="position:absolute;left:1260px;top:654px;width:1px;height:16px;background:#c8c088"></div>
<div class="t" style="left:1264px;top:656.37px;font-size:11.6px;color:#000;">1000 rows</div>
<div style="position:absolute;left:822px;top:644px;width:113px;height:36px;background:#4347cf;border-radius:3px"></div>
<div style="position:absolute;left:935px;top:645px;width:8px;height:33px;background:#6a6ed8"></div>
<div style="position:absolute;left:943px;top:648px;width:132px;height:32px;background:#4347cf;border-radius:3px"></div>
<div style="position:absolute;left:1341px;top:78px;width:16px;height:78px;background:#3f5176;border:1px solid #52648a;border-right:none;box-sizing:border-box;border-radius:2px 0 0 2px"></div>
<div class="t" style="left:1357.5px;top:101px;font-size:11.6px;color:#ffffff;transform-origin:0 0;transform:rotate(90deg);">Properties</div>
<svg style="position:absolute;left:1345px;top:80px" width="12" height="13" viewBox="0 0 12 13"><rect x="0.5" y="0.5" width="10" height="11" fill="#f4f8ff" stroke="#c8d0e0"/><path d="M2.5 2V10M5.5 2V10" stroke="#7a8494" stroke-dasharray="1.5 1"/><path d="M7 4L11.5 9.5" stroke="#1a1a1a" stroke-width="3.2"/><path d="M7 4L11.5 9.5" stroke="#e8c030" stroke-width="2"/><circle cx="11" cy="10.5" r="2" fill="#e8c030"/></svg>
<svg style="position:absolute;left:1320px;top:87px" width="9" height="5" viewBox="0 0 9 5"><path d="M0 0H9L4.5 5Z" fill="#cfd6e3"/></svg>
<div class="t" style="left:1px;top:689.95px;font-size:10.9px;color:#ffffff;">Ready</div>
<div class="t" style="left:1008px;top:689.95px;font-size:10.9px;color:#ffffff;">Ln 8</div>
<div class="t" style="left:1100px;top:689.95px;font-size:10.9px;color:#ffffff;">Col 25</div>
<div class="t" style="left:1192px;top:689.95px;font-size:10.9px;color:#ffffff;">Ch 25</div>
<div class="t" style="left:1327px;top:689.95px;font-size:10.9px;color:#ffffff;">INS</div>
</body></html>
